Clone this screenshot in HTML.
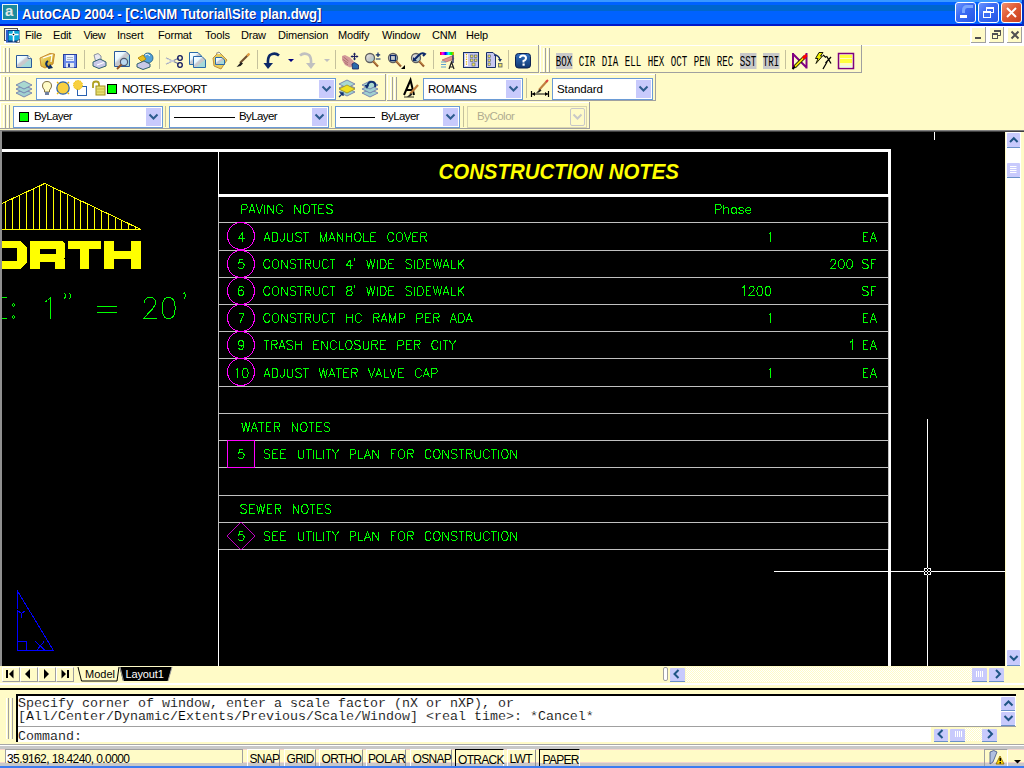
<!DOCTYPE html>
<html><head><meta charset="utf-8">
<style>
*{margin:0;padding:0;box-sizing:border-box}
html,body{width:1024px;height:768px;overflow:hidden;background:#FFFBC7;font-family:"Liberation Sans",sans-serif}
#root{position:relative;width:1024px;height:768px;overflow:hidden;background:#FFFBC7}
.a{position:absolute}
#title{left:0;top:0;width:1024px;height:26px;background:linear-gradient(to bottom,#3A98FF 0,#3A98FF 2px,#0062FF 2px,#0062FF 5px,#0066CC 5px,#0066CC 11px,#0062FF 11px,#0062FF 24px,#0018C8 24px,#0018C8 26px)}
#ttext{left:22px;top:6px;font-size:14px;font-weight:bold;color:#fff;white-space:nowrap;text-shadow:1px 1px 0 #0A1874;transform:scaleX(0.942);transform-origin:0 0}
.tbtn{top:2px;width:21px;height:21px;border:1px solid #fff;border-radius:3px;background:linear-gradient(135deg,#6C95FF 0,#3C6CF4 40%,#2456E6 100%)}
.menu{top:29px;font-size:11px;color:#000;white-space:nowrap;letter-spacing:-0.2px}
.tb{background:#FFFBC7;border-top:1px solid #fff;border-bottom:1px solid #A0A0A0;border-right:1px solid #A0A0A0}
.grip{width:2px;border-left:1px solid #fff;border-right:1px solid #999}
.sep{width:2px;border-left:1px solid #C8C4A0;border-right:1px solid #fff}
.combo{background:#fff;border:1px solid #7F9DB9;font-size:12px;white-space:nowrap;overflow:hidden}
.dd{background:#C6CCFC;border:1px solid #fff}
#draw{left:2px;top:132px;width:1003px;height:534px;background:#000;overflow:hidden}
.cmd{font-family:"Liberation Mono",monospace;font-size:13.33px;line-height:13px;color:#000;white-space:pre;-webkit-text-stroke:0.15px #fff}
.ct{font-size:11.5px;white-space:nowrap;color:#000}
.sb{font-size:12px;line-height:13px;white-space:nowrap;letter-spacing:-0.7px}
</style></head><body><div id="root">
<!-- TITLE -->
<div id="title" class="a"></div>
<div class="a" style="left:2px;top:4px;width:16px;height:16px;background:#1C8C9C;border:1px solid #E8F4F4"></div>
<div class="a" style="left:5px;top:2px;font-size:15px;font-weight:bold;color:#E0E8E8">a</div>
<div id="ttext" class="a">AutoCAD 2004 - [C:\CNM Tutorial\Site plan.dwg]</div>
<div class="a tbtn" style="left:955px"></div>
<div class="a tbtn" style="left:978px"></div>
<div class="a tbtn" style="left:1001px;background:linear-gradient(135deg,#F09070 0,#E05C34 45%,#C84020 100%)"></div>
<div class="a" style="left:1022px;top:0;width:2px;height:26px;background:#0030C0"></div>

<!-- MENU -->
<div class="a menu" style="left:25px">File</div>
<div class="a menu" style="left:53px">Edit</div>
<div class="a menu" style="left:83.5px;letter-spacing:-0.5px">View</div>
<div class="a menu" style="left:117px">Insert</div>
<div class="a menu" style="left:158px">Format</div>
<div class="a menu" style="left:205px">Tools</div>
<div class="a menu" style="left:241px">Draw</div>
<div class="a menu" style="left:278px">Dimension</div>
<div class="a menu" style="left:338px">Modify</div>
<div class="a menu" style="left:382px">Window</div>
<div class="a menu" style="left:432px">CNM</div>
<div class="a menu" style="left:466px">Help</div>

<!-- TOOLBARS -->
<div class="a" style="left:0px;top:45px;width:1024px;height:1px;background:#fff"></div>
<div class="a" style="left:0px;top:45px;width:538px;height:1px;background:#fff"></div>
<div class="a" style="left:0px;top:45px;width:1px;height:27px;background:#fff"></div>
<div class="a" style="left:538px;top:45px;width:1px;height:28px;background:#A0A0A0"></div>
<div class="a" style="left:0px;top:72px;width:539px;height:1px;background:#A0A0A0"></div>
<div class="a" style="left:3px;top:48px;width:1px;height:24px;background:#fff"></div>
<div class="a" style="left:5px;top:48px;width:1px;height:24px;background:#A0A0A0"></div>
<div class="a" style="left:7px;top:48px;width:1px;height:24px;background:#fff"></div>
<div class="a" style="left:9px;top:48px;width:1px;height:24px;background:#A0A0A0"></div>
<div class="a" style="left:540px;top:45px;width:321px;height:1px;background:#fff"></div>
<div class="a" style="left:540px;top:45px;width:1px;height:27px;background:#fff"></div>
<div class="a" style="left:861px;top:45px;width:1px;height:28px;background:#A0A0A0"></div>
<div class="a" style="left:540px;top:72px;width:322px;height:1px;background:#A0A0A0"></div>
<div class="a" style="left:543px;top:48px;width:1px;height:24px;background:#fff"></div>
<div class="a" style="left:545px;top:48px;width:1px;height:24px;background:#A0A0A0"></div>
<div class="a" style="left:547px;top:48px;width:1px;height:24px;background:#fff"></div>
<div class="a" style="left:549px;top:48px;width:1px;height:24px;background:#A0A0A0"></div>
<div class="a" style="left:0px;top:74px;width:385px;height:1px;background:#fff"></div>
<div class="a" style="left:0px;top:74px;width:1px;height:26px;background:#fff"></div>
<div class="a" style="left:385px;top:74px;width:1px;height:27px;background:#A0A0A0"></div>
<div class="a" style="left:0px;top:100px;width:386px;height:1px;background:#A0A0A0"></div>
<div class="a" style="left:3px;top:77px;width:1px;height:23px;background:#fff"></div>
<div class="a" style="left:5px;top:77px;width:1px;height:23px;background:#A0A0A0"></div>
<div class="a" style="left:7px;top:77px;width:1px;height:23px;background:#fff"></div>
<div class="a" style="left:9px;top:77px;width:1px;height:23px;background:#A0A0A0"></div>
<div class="a" style="left:387px;top:74px;width:268px;height:1px;background:#fff"></div>
<div class="a" style="left:387px;top:74px;width:1px;height:26px;background:#fff"></div>
<div class="a" style="left:655px;top:74px;width:1px;height:27px;background:#A0A0A0"></div>
<div class="a" style="left:387px;top:100px;width:269px;height:1px;background:#A0A0A0"></div>
<div class="a" style="left:390px;top:77px;width:1px;height:23px;background:#fff"></div>
<div class="a" style="left:392px;top:77px;width:1px;height:23px;background:#A0A0A0"></div>
<div class="a" style="left:394px;top:77px;width:1px;height:23px;background:#fff"></div>
<div class="a" style="left:396px;top:77px;width:1px;height:23px;background:#A0A0A0"></div>
<div class="a" style="left:0px;top:102px;width:589px;height:1px;background:#fff"></div>
<div class="a" style="left:0px;top:102px;width:1px;height:26px;background:#fff"></div>
<div class="a" style="left:589px;top:102px;width:1px;height:27px;background:#A0A0A0"></div>
<div class="a" style="left:0px;top:128px;width:590px;height:1px;background:#A0A0A0"></div>
<div class="a" style="left:3px;top:105px;width:1px;height:23px;background:#fff"></div>
<div class="a" style="left:5px;top:105px;width:1px;height:23px;background:#A0A0A0"></div>
<div class="a" style="left:7px;top:105px;width:1px;height:23px;background:#fff"></div>
<div class="a" style="left:9px;top:105px;width:1px;height:23px;background:#A0A0A0"></div>
<div class="a" style="left:84px;top:50px;width:1px;height:19px;background:#C5C19C"></div>
<div class="a" style="left:159px;top:50px;width:1px;height:19px;background:#C5C19C"></div>
<div class="a" style="left:257px;top:50px;width:1px;height:19px;background:#C5C19C"></div>
<div class="a" style="left:335px;top:50px;width:1px;height:19px;background:#C5C19C"></div>
<div class="a" style="left:433px;top:50px;width:1px;height:19px;background:#C5C19C"></div>
<div class="a" style="left:508px;top:50px;width:1px;height:19px;background:#C5C19C"></div>
<div class="a" style="left:785px;top:50px;width:1px;height:19px;background:#C5C19C"></div>
<div class="a" style="left:526px;top:78px;width:1px;height:20px;background:#C5C19C"></div>
<div class="a" style="left:165px;top:106px;width:1px;height:21px;background:#C5C19C"></div>
<div class="a" style="left:331px;top:106px;width:1px;height:21px;background:#C5C19C"></div>
<div class="a" style="left:463px;top:106px;width:1px;height:21px;background:#C5C19C"></div>
<div class="a" style="left:36px;top:78px;width:300px;height:22px;background:#fff;border:1px solid #6A9BD6"></div>
<div class="a" style="left:319px;top:80px;width:15px;height:18px;background:#C8CAFC"></div>
<svg class="a" style="left:319px;top:80px" width="15" height="18"><path d="M3.5,6.5 L7.5,10.5 L11.5,6.5" fill="none" stroke="#2D5C8E" stroke-width="2"/></svg>
<div class="a" style="left:423px;top:78px;width:100px;height:22px;background:#fff;border:1px solid #6A9BD6"></div>
<div class="a" style="left:506px;top:80px;width:15px;height:18px;background:#C8CAFC"></div>
<svg class="a" style="left:506px;top:80px" width="15" height="18"><path d="M3.5,6.5 L7.5,10.5 L11.5,6.5" fill="none" stroke="#2D5C8E" stroke-width="2"/></svg>
<div class="a" style="left:552px;top:78px;width:101px;height:22px;background:#fff;border:1px solid #6A9BD6"></div>
<div class="a" style="left:636px;top:80px;width:15px;height:18px;background:#C8CAFC"></div>
<svg class="a" style="left:636px;top:80px" width="15" height="18"><path d="M3.5,6.5 L7.5,10.5 L11.5,6.5" fill="none" stroke="#2D5C8E" stroke-width="2"/></svg>
<div class="a" style="left:13px;top:106px;width:150px;height:22px;background:#fff;border:1px solid #6A9BD6"></div>
<div class="a" style="left:146px;top:108px;width:15px;height:18px;background:#C8CAFC"></div>
<svg class="a" style="left:146px;top:108px" width="15" height="18"><path d="M3.5,6.5 L7.5,10.5 L11.5,6.5" fill="none" stroke="#2D5C8E" stroke-width="2"/></svg>
<div class="a" style="left:169px;top:106px;width:160px;height:22px;background:#fff;border:1px solid #6A9BD6"></div>
<div class="a" style="left:312px;top:108px;width:15px;height:18px;background:#C8CAFC"></div>
<svg class="a" style="left:312px;top:108px" width="15" height="18"><path d="M3.5,6.5 L7.5,10.5 L11.5,6.5" fill="none" stroke="#2D5C8E" stroke-width="2"/></svg>
<div class="a" style="left:335px;top:106px;width:125px;height:22px;background:#fff;border:1px solid #6A9BD6"></div>
<div class="a" style="left:443px;top:108px;width:15px;height:18px;background:#C8CAFC"></div>
<svg class="a" style="left:443px;top:108px" width="15" height="18"><path d="M3.5,6.5 L7.5,10.5 L11.5,6.5" fill="none" stroke="#2D5C8E" stroke-width="2"/></svg>
<div class="a" style="left:467px;top:106px;width:120px;height:22px;background:#FFFBC7;border:1px solid #D8D4B0"></div>
<div class="a" style="left:570px;top:108px;width:15px;height:18px;background:#FFFBC7;border:1px solid #C8C8C8;border-radius:2px"></div>
<svg class="a" style="left:570px;top:108px" width="15" height="18"><path d="M3.5,6.5 L7.5,10.5 L11.5,6.5" fill="none" stroke="#C8C8C8" stroke-width="2"/></svg>
<div class="a ct" style="left:122px;top:83px;letter-spacing:-0.47px">NOTES-EXPORT</div>
<div class="a ct" style="left:428px;top:83px;letter-spacing:-0.3px">ROMANS</div>
<div class="a ct" style="left:557px;top:83px;letter-spacing:-0.1px">Standard</div>
<div class="a ct" style="left:34px;top:110px;letter-spacing:-0.6px">ByLayer</div>
<div class="a ct" style="left:239px;top:110px;letter-spacing:-0.6px">ByLayer</div>
<div class="a ct" style="left:381px;top:110px;letter-spacing:-0.6px">ByLayer</div>
<div class="a ct" style="left:477px;top:110px;color:#B0AC90;letter-spacing:-0.5px">ByColor</div>
<div class="a" style="left:107px;top:84px;width:10px;height:10px;background:#00FF00;border:1px solid #000"></div>
<div class="a" style="left:19px;top:112px;width:10px;height:10px;background:#00FF00;border:1px solid #000"></div>
<div class="a" style="left:174px;top:117px;width:61px;height:1px;background:#000"></div>
<div class="a" style="left:340px;top:117px;width:35px;height:1px;background:#000"></div>
<svg class="a" style="left:0;top:45px" width="1024" height="86" viewBox="0 45 1024 86" font-family="Liberation Sans"><defs>
<linearGradient id="gdoc" x1="0" y1="0" x2="1" y2="1"><stop offset="0" stop-color="#fff"/><stop offset="0.35" stop-color="#E8F8FF"/><stop offset="0.45" stop-color="#C8C8D0"/><stop offset="0.6" stop-color="#C8C8C8"/><stop offset="0.62" stop-color="#A8D8D8"/><stop offset="1" stop-color="#A0D8D8"/></linearGradient>
<linearGradient id="gfold" x1="0" y1="0" x2="1" y2="1"><stop offset="0" stop-color="#F8E8A0"/><stop offset="0.5" stop-color="#E0C040"/><stop offset="1" stop-color="#C09020"/></linearGradient>
<linearGradient id="gmag" x1="0" y1="0" x2="1" y2="1"><stop offset="0" stop-color="#F0F0F0"/><stop offset="0.5" stop-color="#C8C8C8"/><stop offset="1" stop-color="#90D0D8"/></linearGradient>
<linearGradient id="ghelp" x1="0" y1="0" x2="0" y2="1"><stop offset="0" stop-color="#3070C0"/><stop offset="1" stop-color="#103870"/></linearGradient>
</defs>
<g transform="translate(16,55)">
<defs></defs>
<path d="M0.5,0.5 H12 L15.5,4 V12.5 H0.5 Z" fill="url(#gdoc)" stroke="#2A5A9A" stroke-width="1"/>
<path d="M12,0.5 V3.5 H15.5" fill="#fff" stroke="#2A5A9A" stroke-width="0.8"/>
</g>
<path d="M40,58 L50,53.5 L54.5,54 L53,64 L45,68 L41,66 Z" fill="url(#gfold)" stroke="#C88830" stroke-width="1"/>
<path d="M43,58 L52,55 L51,62" fill="none" stroke="#fff" stroke-width="1.2"/>
<path d="M48,61 Q45,63 47,66 L50,68" fill="none" stroke="#0A2A60" stroke-width="2"/><path d="M48,69 L53,68 L50,64 Z" fill="#0A2A60"/>
<rect x="63.5" y="54.5" width="13" height="13" fill="#6C8CE8" stroke="#2840A0" stroke-width="1"/>
<rect x="66" y="55" width="8" height="6" fill="#E8F0FF"/><path d="M67,57.5 H73 M67,59.5 H73" stroke="#9AB" stroke-width="0.8"/>
<rect x="66" y="63" width="8" height="4.5" fill="#E0E8F0"/><rect x="68" y="63.5" width="2" height="3.5" fill="#2840A0"/>
<path d="M94,55 L98,53.5 L101,56 L101,62 L96,63 Z" fill="#E8E8F0" stroke="#707890" stroke-width="0.8"/>
<path d="M93,62 L100,59 L106,62 L106,66 L99,68.5 L93,66 Z" fill="#C8C8E8" stroke="#306070" stroke-width="1"/>
<path d="M97,65 L104,62.5" stroke="#fff" stroke-width="1.2"/>
<path d="M114.5,51.5 H126 L129.5,55 V66.5 H114.5 Z" fill="url(#gdoc)" stroke="#2A5A9A" stroke-width="1"/>
<circle cx="124" cy="62" r="3.6" fill="#B8D8F0" stroke="#505870" stroke-width="1.2"/>
<path d="M121.5,64.5 L117,69" stroke="#905028" stroke-width="1.8"/>
<circle cx="148" cy="58" r="5" fill="#50A0D8" stroke="#205880" stroke-width="0.8"/><path d="M145,55 Q148,53 150,56" stroke="#fff" stroke-width="1" fill="none"/>
<path d="M138,58 L143,55 L146,59 L142,62 Z" fill="#E8C020" stroke="#B08000" stroke-width="0.8"/>
<path d="M137,64 L144,61 L150,64 L150,67 L143,69.5 L137,67 Z" fill="#C8C8E8" stroke="#306070" stroke-width="1"/>
<path d="M166,58 L179,64 M166,64 L179,58" stroke="#7880A0" stroke-width="1.3"/><path d="M166,58.5 L174,61.5 M166,63.5 L174,60.5" stroke="#fff" stroke-width="0.6"/>
<circle cx="180" cy="58" r="2.3" fill="none" stroke="#101860" stroke-width="1.3"/><circle cx="180" cy="65" r="2.3" fill="none" stroke="#101860" stroke-width="1.3"/>
<path d="M189.5,52.5 H198 L201.5,56 V64.5 H189.5 Z" fill="url(#gdoc)" stroke="#2A6AAA" stroke-width="1"/>
<path d="M193.5,56.5 H202 L205.5,60 V67.5 H193.5 Z" fill="url(#gdoc)" stroke="#2A6AAA" stroke-width="1"/>
<path d="M213,58 L219,52 L227,60 L221,69 L214,66 Z" fill="#E8D060" stroke="#C09040" stroke-width="1"/>
<path d="M215.5,57.5 H222 L224.5,60 V64.5 H215.5 Z" fill="url(#gdoc)" stroke="#2A6AAA" stroke-width="1"/>
<path d="M216,53.5 L219,52 L221,54" stroke="#909090" stroke-width="1" fill="#fff"/>
<path d="M249,54 L240,63" stroke="#705030" stroke-width="2.2"/><path d="M249.5,53.5 L247,56" stroke="#E8A040" stroke-width="2"/>
<path d="M241,62 L237,66.5 L236.5,67 L240.5,66 L243,63.5 Z" fill="#202020"/>
<path d="M279,55.5 Q275,52 270,55 Q267.5,57.5 268,64" fill="none" stroke="#0C2868" stroke-width="2.6"/>
<path d="M263.5,63 L273,63 L268,69 Z" fill="#0C2868"/>
<path d="M288,59 H294 L291,62 Z" fill="#000080"/>
<path d="M300,55.5 Q304,52 309,55 Q311.5,57.5 311,64" fill="none" stroke="#C0C0C0" stroke-width="2.6"/>
<path d="M315.5,63 L306,63 L311,69 Z" fill="#C0C0C0"/>
<path d="M324,59 H330 L327,62 Z" fill="#C0C0C0"/>
<path d="M342,56 L345,55 L350,57.5 L354,61.5 L354,65.5 L350,67.5 L345,65 L342,60 Z" fill="#D49A9A"/>
<path d="M343.5,57 L348.5,61 M343,59.5 L348,63 M344.5,62.5 L348,65" stroke="#A86A6A" stroke-width="0.9"/>
<path d="M352,64 L354.5,62.5 L358.5,65 L358.5,69 L352.5,69 Z" fill="#2A6AAA" stroke="#1A2060" stroke-width="0.8"/>
<path d="M354.5,53 V60 M351,56.5 H358" stroke="#1C2060" stroke-width="1.2"/><path d="M353,54.5 L354.5,52.5 L356,54.5 Z M353,58.5 L354.5,60.5 L356,58.5 Z M352.5,55 L350.5,56.5 L352.5,58 Z M356.5,55 L358.5,56.5 L356.5,58 Z" fill="#1C2060"/>
<circle cx="370" cy="58" r="4.5" fill="url(#gmag)" stroke="#606060" stroke-width="1.3"/>
<path d="M373,61 L378,66.5" stroke="#905028" stroke-width="2"/><path d="M373.5,61 L378,65.5" stroke="#E8C060" stroke-width="0.8"/>
<path d="M378,52.5 V57 M375.8,54.8 H380.2 M375.8,59 H380.5" stroke="#0C2868" stroke-width="1.2"/>
<circle cx="393" cy="58" r="4.5" fill="url(#gmag)" stroke="#606060" stroke-width="1.3"/>
<path d="M396,61 L401,66.5" stroke="#905028" stroke-width="2"/><path d="M396.5,61 L401,65.5" stroke="#E8C060" stroke-width="0.8"/>
<rect x="390.5" y="55.5" width="5" height="5" fill="none" stroke="#0C2868" stroke-width="1.2"/>
<path d="M401,69 L405,65 L405,69 Z" fill="#000"/>
<circle cx="416" cy="58" r="4.5" fill="url(#gmag)" stroke="#606060" stroke-width="1.3"/>
<path d="M419,61 L424,66.5" stroke="#905028" stroke-width="2"/><path d="M419.5,61 L424,65.5" stroke="#E8C060" stroke-width="0.8"/>
<path d="M414,60 L419,55 Q422,52 425,54 L423,56" fill="none" stroke="#0C2868" stroke-width="2"/><path d="M413,57 V61 H417 Z" fill="#0C2868"/>
<rect x="440" y="52" width="14" height="3" fill="url(#grain)"/>
<defs><linearGradient id="grain" x1="0" x2="1"><stop offset="0" stop-color="#FF0000"/><stop offset="0.2" stop-color="#FF00FF"/><stop offset="0.4" stop-color="#0000FF"/><stop offset="0.6" stop-color="#00FFFF"/><stop offset="0.8" stop-color="#00FF00"/><stop offset="1" stop-color="#FFA000"/></linearGradient></defs>
<path d="M442,60 L452,56 L454,59 L446,62 Z" fill="#E09090" stroke="#A05050" stroke-width="0.6"/><path d="M453,55 V63" stroke="#303870" stroke-width="1.5"/>
<path d="M441,62 H446 M441,64.5 H446 M441,67 H446" stroke="#60A0D0" stroke-width="1.2"/><path d="M449,69 L451.5,62 L454,69 M450,67 H453" fill="none" stroke="#202020" stroke-width="1.2"/>
<rect x="463.5" y="52.5" width="15" height="15" fill="#C8C8F0" stroke="#18306A" stroke-width="1"/>
<rect x="465" y="54" width="3" height="12" fill="#fff"/><path d="M466.5,54 V66" stroke="#E0B000" stroke-width="1.3" stroke-dasharray="1.2,1.2"/>
<rect x="470.5" y="55" width="2.5" height="2.5" fill="#F0E060" stroke="#506070" stroke-width="0.6"/><rect x="474.5" y="55" width="2.5" height="2.5" fill="#F0E060" stroke="#506070" stroke-width="0.6"/><rect x="470.5" y="59" width="2.5" height="2.5" fill="#F0E060" stroke="#506070" stroke-width="0.6"/><rect x="474.5" y="59" width="2.5" height="2.5" fill="#F0E060" stroke="#506070" stroke-width="0.6"/><rect x="472" y="63" width="3" height="3" fill="#F0E060" stroke="#506070" stroke-width="0.6"/>
<path d="M486.5,52.5 H493 L495.5,55 V67.5 H486.5 Z" fill="#C8C8F0" stroke="#18306A" stroke-width="1"/>
<rect x="488" y="55" width="2.5" height="2.5" fill="#F0E060" stroke="#506070" stroke-width="0.6"/><rect x="488" y="59" width="2.5" height="2.5" fill="#F0E060" stroke="#506070" stroke-width="0.6"/><rect x="488" y="63" width="2.5" height="2.5" fill="#F0E060" stroke="#506070" stroke-width="0.6"/>
<path d="M494,55 Q499,55 500,60" fill="none" stroke="#18306A" stroke-width="1.3"/><path d="M498,59 H502 L500,62 Z" fill="#18306A"/><rect x="498.5" y="63.5" width="3.5" height="3.5" fill="#F0E060" stroke="#506070" stroke-width="0.8"/>
<rect x="515.5" y="53.5" width="15" height="14.5" rx="3" fill="url(#ghelp)" stroke="#0C2050" stroke-width="1"/>
<path d="M520,58 Q520,55.5 523,55.5 Q526,55.5 526,58 Q526,60 523.5,61 V62.5" fill="none" stroke="#fff" stroke-width="2"/><rect x="522.5" y="63.5" width="2.2" height="2.2" fill="#fff"/>
<rect x="556" y="53" width="16.5" height="16" fill="#C8C8C8"/>
<text x="564" y="66.3" text-anchor="middle" font-family="Liberation Mono" font-size="15.5" textLength="16.5" lengthAdjust="spacingAndGlyphs" fill="#000">BOX</text>
<text x="587" y="66.3" text-anchor="middle" font-family="Liberation Mono" font-size="15.5" textLength="16.5" lengthAdjust="spacingAndGlyphs" fill="#000">CIR</text>
<text x="610" y="66.3" text-anchor="middle" font-family="Liberation Mono" font-size="15.5" textLength="16.5" lengthAdjust="spacingAndGlyphs" fill="#000">DIA</text>
<text x="633" y="66.3" text-anchor="middle" font-family="Liberation Mono" font-size="15.5" textLength="16.5" lengthAdjust="spacingAndGlyphs" fill="#000">ELL</text>
<text x="656" y="66.3" text-anchor="middle" font-family="Liberation Mono" font-size="15.5" textLength="16.5" lengthAdjust="spacingAndGlyphs" fill="#000">HEX</text>
<text x="679" y="66.3" text-anchor="middle" font-family="Liberation Mono" font-size="15.5" textLength="16.5" lengthAdjust="spacingAndGlyphs" fill="#000">OCT</text>
<text x="702" y="66.3" text-anchor="middle" font-family="Liberation Mono" font-size="15.5" textLength="16.5" lengthAdjust="spacingAndGlyphs" fill="#000">PEN</text>
<text x="725" y="66.3" text-anchor="middle" font-family="Liberation Mono" font-size="15.5" textLength="16.5" lengthAdjust="spacingAndGlyphs" fill="#000">REC</text>
<rect x="740" y="53" width="16.5" height="16" fill="#C8C8C8"/>
<text x="748" y="66.3" text-anchor="middle" font-family="Liberation Mono" font-size="15.5" textLength="16.5" lengthAdjust="spacingAndGlyphs" fill="#000">SST</text>
<rect x="763" y="53" width="16.5" height="16" fill="#C8C8C8"/>
<text x="771" y="66.3" text-anchor="middle" font-family="Liberation Mono" font-size="15.5" textLength="16.5" lengthAdjust="spacingAndGlyphs" fill="#000">TRI</text>
<path d="M793,53 V68.5 M806.5,53 V68.5 M793,54 L806.5,67.5" fill="none" stroke="#800080" stroke-width="2"/>
<path d="M794.5,67 L805,56.5" stroke="#000" stroke-width="3.4"/><path d="M794.5,67 L805,56.5" stroke="#F0E000" stroke-width="1.8"/><path d="M803,58.5 L806.5,55" stroke="#FF0000" stroke-width="3"/><path d="M792.5,69 L795,66.5" stroke="#000" stroke-width="2"/>
<path d="M819,52.5 L823,52.5 L820.5,56 L822.5,56 L816,63.5 L818,58.5 L815.5,58.5 Z" fill="#F0F000" stroke="#000" stroke-width="0.9"/>
<path d="M823,55 L826,57.5 M826.5,56 L831,63.5 M831,57 L825.5,63 M827,62 L823,69" stroke="#000" stroke-width="1.3"/>
<rect x="838.5" y="53.5" width="15" height="15" fill="#FFFBC7" stroke="#800080" stroke-width="1.5"/><rect x="840" y="55" width="12" height="3" fill="#FFFF40"/><rect x="840" y="59" width="12" height="4" fill="#FFFF40"/><rect x="840" y="66" width="12" height="1.5" fill="#E8F8F0"/>
<path d="M16,93 L24,89 L32,93 L24,97 Z" fill="#A0D0D0" stroke="#6870A8" stroke-width="0.8"/>
<path d="M16,89 L24,85 L32,89 L24,93 Z" fill="#A0D0D0" stroke="#6870A8" stroke-width="0.8"/>
<path d="M16,85 L24,81 L32,85 L24,89 Z" fill="#A8D8D0" stroke="#6870A8" stroke-width="0.8"/>
<path d="M47,81.5 Q51.5,81.5 51.5,86 Q51.5,88 49.5,90 V92 H44.5 V90 Q42.5,88 42.5,86 Q42.5,81.5 47,81.5 Z" fill="#FFFBC7" stroke="#807040" stroke-width="1"/><rect x="45" y="92" width="4" height="3" fill="#7080A0"/>
<circle cx="63" cy="88" r="6.2" fill="#F8D040" stroke="#2860B0" stroke-width="1.2"/>
<path d="M57,82 L58.5,83.5 M69,82 L67.5,83.5 M57,94 L58.5,92.5 M69,94 L67.5,92.5" stroke="#F0B800" stroke-width="1.4"/>
<rect x="77.5" y="86.5" width="9" height="9" fill="#fff" stroke="#2860B0" stroke-width="1"/>
<circle cx="78" cy="85" r="4.5" fill="#F8D040" stroke="#F0C000" stroke-width="1" stroke-dasharray="1.5,1"/>
<path d="M93,88 V84 Q93,81.5 96,81.5 Q99,81.5 99,84 V86" fill="none" stroke="#B0A020" stroke-width="1.8"/>
<rect x="96" y="86" width="9" height="9" fill="#E8E070" stroke="#A09020" stroke-width="1"/><path d="M97,89 H104 M97,92 H104" stroke="#C0B040" stroke-width="0.8"/>
<path d="M339,92 L347,88 L355,92 L347,96 Z" fill="#A0D0D0" stroke="#6870A8" stroke-width="0.8"/>
<path d="M339,88 L347,84 L355,88 L347,92 Z" fill="#A0D0D0" stroke="#6870A8" stroke-width="0.8"/>
<path d="M339,84 L347,80 L355,84 L347,88 Z" fill="#A8D8D0" stroke="#6870A8" stroke-width="0.8"/>
<path d="M339,89 L347,85 L355,89 L347,93 Z" fill="#F0E020" stroke="#A09020" stroke-width="0.8"/>
<path d="M339,97 L343,93 M340,93 H343 V96" fill="none" stroke="#103070" stroke-width="1.3"/>
<path d="M362,93 L370,89 L378,93 L370,97 Z" fill="#A0D0D0" stroke="#6870A8" stroke-width="0.8"/>
<path d="M362,89 L370,85 L378,89 L370,93 Z" fill="#A0D0D0" stroke="#6870A8" stroke-width="0.8"/>
<path d="M362,85 L370,81 L378,85 L370,89 Z" fill="#A8D8D0" stroke="#6870A8" stroke-width="0.8"/>
<path d="M367,87 Q368,81 373,82 Q376,83 375,87" fill="none" stroke="#103070" stroke-width="2"/><path d="M364.5,85 L369,85 L367,89 Z" fill="#103070"/>
<path d="M404,95 L410.5,80 L414,95 M406.5,90 H413" fill="none" stroke="#000" stroke-width="2"/>
<path d="M418,85 L410,94" stroke="#C08040" stroke-width="2.2"/><path d="M411,93 L407,97 L410,96.5 L412.5,94.5 Z" fill="#202020"/><path d="M404,97 H414" stroke="#000" stroke-width="0.8"/>
<path d="M531.5,91 V97 M548.5,91 V97 M532,94 H548" stroke="#000" stroke-width="1.2"/><path d="M532,94 L535,92 V96 Z M548,94 L545,92 V96 Z" fill="#000"/>
<path d="M547,81 L539,90" stroke="#C08040" stroke-width="2.2"/><path d="M540,89 L536,93 L539,92.5 L541.5,90.5 Z" fill="#202020"/><path d="M546,82 L548,80" stroke="#E04040" stroke-width="2"/></svg>
<!-- DRAWING -->
<div class="a" style="left:0;top:130px;width:1024px;height:1px;background:#808080"></div>
<div class="a" style="left:0;top:131px;width:1024px;height:1px;background:#404040"></div>
<div class="a" style="left:0;top:131px;width:2px;height:536px;background:#909090"></div>
<div id="draw" class="a"></div>
<svg class="a" style="left:2px;top:132px" width="1003" height="534" viewBox="2 132 1003 534" font-family="Liberation Sans" shape-rendering="crispEdges"><rect x="2" y="149" width="889" height="3" fill="#FFFFFF"/>
<rect x="888" y="149" width="3" height="48" fill="#FFFFFF"/>
<rect x="218" y="152" width="1" height="42" fill="#FFFFFF"/>
<rect x="218" y="194" width="673" height="3" fill="#FFFFFF"/>
<rect x="218" y="197" width="1" height="352" fill="#C0C0C0"/>
<rect x="218" y="549" width="1" height="117" fill="#FFFFFF"/>
<rect x="888" y="197" width="1" height="352" fill="#C0C0C0"/>
<rect x="889" y="197" width="2" height="352" fill="#FFFFFF"/>
<rect x="888" y="549" width="3" height="117" fill="#FFFFFF"/>
<rect x="219" y="222" width="669" height="1" fill="#C0C0C0"/>
<rect x="219" y="250" width="669" height="1" fill="#C0C0C0"/>
<rect x="219" y="277" width="669" height="1" fill="#C0C0C0"/>
<rect x="219" y="304" width="669" height="1" fill="#C0C0C0"/>
<rect x="219" y="331" width="669" height="1" fill="#C0C0C0"/>
<rect x="219" y="358" width="669" height="1" fill="#C0C0C0"/>
<rect x="219" y="386" width="669" height="1" fill="#C0C0C0"/>
<rect x="219" y="413" width="669" height="1" fill="#C0C0C0"/>
<rect x="219" y="440" width="669" height="1" fill="#C0C0C0"/>
<rect x="219" y="467" width="669" height="1" fill="#C0C0C0"/>
<rect x="219" y="495" width="669" height="1" fill="#C0C0C0"/>
<rect x="219" y="522" width="669" height="1" fill="#C0C0C0"/>
<rect x="219" y="549" width="669" height="1" fill="#C0C0C0"/>
<rect x="934" y="132" width="1" height="8" fill="#FFFFFF"/>
<rect x="927" y="419" width="1" height="247" fill="#FFFFFF"/>
<rect x="774" y="571" width="231" height="1" fill="#FFFFFF"/>
<rect x="924.5" y="568.5" width="6" height="6" fill="none" stroke="#fff" stroke-width="1"/>
<rect x="927" y="568" width="1" height="1" fill="#000"/>
<rect x="927" y="574" width="1" height="1" fill="#000"/>
<rect x="924" y="571" width="1" height="1" fill="#000"/>
<rect x="930" y="571" width="1" height="1" fill="#000"/>
<rect x="927" y="571" width="1" height="1" fill="#000"/>
<text x="438.5" y="179" font-size="21.5" fill="#FFFF00" textLength="240.5" lengthAdjust="spacingAndGlyphs" font-weight="bold" font-style="italic" shape-rendering="auto">CONSTRUCTION NOTES</text>
<path d="M241.50,204.50 L241.50,213.50 M241.50,204.50 L245.15,204.50 L246.36,204.93 L246.76,205.36 L247.17,206.21 L247.17,207.50 L246.76,208.36 L246.36,208.79 L245.15,209.21 L241.50,209.21 M252.03,204.50 L248.79,213.50 M252.03,204.50 L255.27,213.50 M250.00,210.50 L254.06,210.50 M256.08,204.50 L259.32,213.50 M262.56,204.50 L259.32,213.50 M264.58,204.50 L264.58,213.50 M267.82,204.50 L267.82,213.50 M267.82,204.50 L273.50,213.50 M273.50,204.50 L273.50,213.50 M282.40,206.64 L282.00,205.79 L281.19,204.93 L280.38,204.50 L278.76,204.50 L277.95,204.93 L277.14,205.79 L276.74,206.64 L276.33,207.93 L276.33,210.07 L276.74,211.36 L277.14,212.21 L277.95,213.07 L278.76,213.50 L280.38,213.50 L281.19,213.07 L282.00,212.21 L282.40,211.36 L282.40,210.07 M280.38,210.07 L282.40,210.07 M294.56,204.50 L294.56,213.50 M294.56,204.50 L300.23,213.50 M300.23,204.50 L300.23,213.50 M305.49,204.50 L304.68,204.93 L303.87,205.79 L303.47,206.64 L303.06,207.93 L303.06,210.07 L303.47,211.36 L303.87,212.21 L304.68,213.07 L305.49,213.50 L307.11,213.50 L307.92,213.07 L308.73,212.21 L309.13,211.36 L309.54,210.07 L309.54,207.93 L309.13,206.64 L308.73,205.79 L307.92,204.93 L307.11,204.50 L305.49,204.50 M314.00,204.50 L314.00,213.50 M311.16,204.50 L316.83,204.50 M318.86,204.50 L318.86,213.50 M318.86,204.50 L324.12,204.50 M318.86,208.79 L322.10,208.79 M318.86,213.50 L324.12,213.50 M332.22,205.79 L331.41,204.93 L330.19,204.50 L328.57,204.50 L327.36,204.93 L326.55,205.79 L326.55,206.64 L326.96,207.50 L327.36,207.93 L328.17,208.36 L330.60,209.21 L331.41,209.64 L331.81,210.07 L332.22,210.93 L332.22,212.21 L331.41,213.07 L330.19,213.50 L328.57,213.50 L327.36,213.07 L326.55,212.21" fill="none" stroke="#00FF00" stroke-width="1"/>
<path d="M715.40,204.50 L715.40,213.50 M715.40,204.50 L719.04,204.50 L720.26,204.93 L720.66,205.36 L721.07,206.21 L721.07,207.50 L720.66,208.36 L720.26,208.79 L719.04,209.21 L715.40,209.21 M723.90,204.50 L723.90,213.50 M723.90,209.21 L725.12,207.93 L725.93,207.50 L727.14,207.50 L727.95,207.93 L728.36,209.21 L728.36,213.50 M736.05,207.50 L736.05,213.50 M736.05,208.79 L735.25,207.93 L734.43,207.50 L733.22,207.50 L732.41,207.93 L731.60,208.79 L731.19,210.07 L731.19,210.93 L731.60,212.21 L732.41,213.07 L733.22,213.50 L734.43,213.50 L735.25,213.07 L736.05,212.21 M743.35,208.79 L742.94,207.93 L741.73,207.50 L740.51,207.50 L739.29,207.93 L738.89,208.79 L739.29,209.64 L740.11,210.07 L742.13,210.50 L742.94,210.93 L743.35,211.79 L743.35,212.21 L742.94,213.07 L741.73,213.50 L740.51,213.50 L739.29,213.07 L738.89,212.21 M745.77,210.07 L750.63,210.07 L750.63,209.21 L750.23,208.36 L749.82,207.93 L749.01,207.50 L747.80,207.50 L746.99,207.93 L746.18,208.79 L745.77,210.07 L745.77,210.93 L746.18,212.21 L746.99,213.07 L747.80,213.50 L749.01,213.50 L749.82,213.07 L750.63,212.21" fill="none" stroke="#00FF00" stroke-width="1"/>
<ellipse cx="241" cy="236" rx="13.5" ry="13.5" fill="none" stroke="#FF00FF" stroke-width="1"/>
<path d="M242.55,232.50 L238.50,238.50 L244.57,238.50 M242.55,232.50 L242.55,241.50" fill="none" stroke="#00FF00" stroke-width="1"/>
<path d="M267.04,232.50 L263.80,241.50 M267.04,232.50 L270.28,241.50 M265.01,238.50 L269.06,238.50 M272.31,232.50 L272.31,241.50 M272.31,232.50 L275.14,232.50 L276.36,232.93 L277.17,233.79 L277.57,234.64 L277.98,235.93 L277.98,238.07 L277.57,239.36 L277.17,240.21 L276.36,241.07 L275.14,241.50 L272.31,241.50 M284.05,232.50 L284.05,239.36 L283.65,240.64 L283.24,241.07 L282.43,241.50 L281.62,241.50 L280.81,241.07 L280.41,240.64 L280.00,239.36 L280.00,238.50 M287.29,232.50 L287.29,238.93 L287.69,240.21 L288.50,241.07 L289.72,241.50 L290.53,241.50 L291.75,241.07 L292.56,240.21 L292.96,238.93 L292.96,232.50 M301.47,233.79 L300.66,232.93 L299.44,232.50 L297.82,232.50 L296.61,232.93 L295.80,233.79 L295.80,234.64 L296.20,235.50 L296.61,235.93 L297.42,236.36 L299.85,237.21 L300.66,237.64 L301.06,238.07 L301.47,238.93 L301.47,240.21 L300.66,241.07 L299.44,241.50 L297.82,241.50 L296.61,241.07 L295.80,240.21 M305.92,232.50 L305.92,241.50 M303.09,232.50 L308.75,232.50 M320.10,232.50 L320.10,241.50 M320.10,232.50 L323.34,241.50 M326.58,232.50 L323.34,241.50 M326.58,232.50 L326.58,241.50 M331.84,232.50 L328.60,241.50 M331.84,232.50 L335.08,241.50 M329.81,238.50 L333.87,238.50 M337.11,232.50 L337.11,241.50 M337.11,232.50 L342.78,241.50 M342.78,232.50 L342.78,241.50 M346.01,232.50 L346.01,241.50 M351.69,232.50 L351.69,241.50 M346.01,236.79 L351.69,236.79 M356.95,232.50 L356.14,232.93 L355.33,233.79 L354.93,234.64 L354.52,235.93 L354.52,238.07 L354.93,239.36 L355.33,240.21 L356.14,241.07 L356.95,241.50 L358.57,241.50 L359.38,241.07 L360.19,240.21 L360.60,239.36 L361.00,238.07 L361.00,235.93 L360.60,234.64 L360.19,233.79 L359.38,232.93 L358.57,232.50 L356.95,232.50 M363.84,232.50 L363.84,241.50 M363.84,241.50 L368.70,241.50 M370.72,232.50 L370.72,241.50 M370.72,232.50 L375.99,232.50 M370.72,236.79 L373.96,236.79 M370.72,241.50 L375.99,241.50 M393.81,234.64 L393.40,233.79 L392.59,232.93 L391.78,232.50 L390.16,232.50 L389.35,232.93 L388.54,233.79 L388.13,234.64 L387.73,235.93 L387.73,238.07 L388.13,239.36 L388.54,240.21 L389.35,241.07 L390.16,241.50 L391.78,241.50 L392.59,241.07 L393.40,240.21 L393.81,239.36 M398.67,232.50 L397.86,232.93 L397.05,233.79 L396.64,234.64 L396.24,235.93 L396.24,238.07 L396.64,239.36 L397.05,240.21 L397.86,241.07 L398.67,241.50 L400.29,241.50 L401.10,241.07 L401.91,240.21 L402.31,239.36 L402.72,238.07 L402.72,235.93 L402.31,234.64 L401.91,233.79 L401.10,232.93 L400.29,232.50 L398.67,232.50 M404.34,232.50 L407.58,241.50 M410.82,232.50 L407.58,241.50 M412.84,232.50 L412.84,241.50 M412.84,232.50 L418.11,232.50 M412.84,236.79 L416.08,236.79 M412.84,241.50 L418.11,241.50 M420.94,232.50 L420.94,241.50 M420.94,232.50 L424.59,232.50 L425.80,232.93 L426.21,233.36 L426.61,234.21 L426.61,235.07 L426.21,235.93 L425.80,236.36 L424.59,236.79 L420.94,236.79 M423.78,236.79 L426.61,241.50" fill="none" stroke="#00FF00" stroke-width="1"/>
<path d="M768.80,234.21 L769.61,233.79 L770.82,232.50 L770.82,241.50" fill="none" stroke="#00FF00" stroke-width="1"/>
<path d="M863.20,232.50 L863.20,241.50 M863.20,232.50 L868.47,232.50 M863.20,236.79 L866.44,236.79 M863.20,241.50 L868.47,241.50 M873.33,232.50 L870.09,241.50 M873.33,232.50 L876.57,241.50 M871.30,238.50 L875.35,238.50" fill="none" stroke="#00FF00" stroke-width="1"/>
<ellipse cx="241" cy="264" rx="13.5" ry="13.5" fill="none" stroke="#FF00FF" stroke-width="1"/>
<path d="M243.36,259.50 L239.31,259.50 L238.91,263.36 L239.31,262.93 L240.53,262.50 L241.74,262.50 L242.96,262.93 L243.76,263.79 L244.17,265.07 L244.17,265.93 L243.76,267.21 L242.96,268.07 L241.74,268.50 L240.53,268.50 L239.31,268.07 L238.91,267.64 L238.50,266.79" fill="none" stroke="#00FF00" stroke-width="1"/>
<path d="M269.88,261.64 L269.47,260.79 L268.66,259.93 L267.85,259.50 L266.23,259.50 L265.42,259.93 L264.61,260.79 L264.20,261.64 L263.80,262.93 L263.80,265.07 L264.20,266.36 L264.61,267.21 L265.42,268.07 L266.23,268.50 L267.85,268.50 L268.66,268.07 L269.47,267.21 L269.88,266.36 M274.74,259.50 L273.93,259.93 L273.12,260.79 L272.71,261.64 L272.31,262.93 L272.31,265.07 L272.71,266.36 L273.12,267.21 L273.93,268.07 L274.74,268.50 L276.36,268.50 L277.17,268.07 L277.98,267.21 L278.38,266.36 L278.79,265.07 L278.79,262.93 L278.38,261.64 L277.98,260.79 L277.17,259.93 L276.36,259.50 L274.74,259.50 M281.62,259.50 L281.62,268.50 M281.62,259.50 L287.29,268.50 M287.29,259.50 L287.29,268.50 M295.80,260.79 L294.99,259.93 L293.77,259.50 L292.15,259.50 L290.94,259.93 L290.12,260.79 L290.12,261.64 L290.53,262.50 L290.94,262.93 L291.75,263.36 L294.18,264.21 L294.99,264.64 L295.39,265.07 L295.80,265.93 L295.80,267.21 L294.99,268.07 L293.77,268.50 L292.15,268.50 L290.94,268.07 L290.12,267.21 M300.25,259.50 L300.25,268.50 M297.42,259.50 L303.09,259.50 M305.11,259.50 L305.11,268.50 M305.11,259.50 L308.75,259.50 L309.97,259.93 L310.38,260.36 L310.78,261.21 L310.78,262.07 L310.38,262.93 L309.97,263.36 L308.75,263.79 L305.11,263.79 M307.94,263.79 L310.78,268.50 M313.62,259.50 L313.62,265.93 L314.02,267.21 L314.83,268.07 L316.05,268.50 L316.86,268.50 L318.07,268.07 L318.88,267.21 L319.29,265.93 L319.29,259.50 M328.20,261.64 L327.79,260.79 L326.98,259.93 L326.17,259.50 L324.55,259.50 L323.74,259.93 L322.93,260.79 L322.53,261.64 L322.12,262.93 L322.12,265.07 L322.53,266.36 L322.93,267.21 L323.74,268.07 L324.55,268.50 L326.17,268.50 L326.98,268.07 L327.79,267.21 L328.20,266.36 M332.65,259.50 L332.65,268.50 M329.81,259.50 L335.49,259.50 M350.47,259.50 L346.42,265.50 L352.50,265.50 M350.47,259.50 L350.47,268.50 M354.93,257.79 L354.93,261.21 M366.67,259.50 L368.70,268.50 M370.72,259.50 L368.70,268.50 M370.72,259.50 L372.75,268.50 M374.77,259.50 L372.75,268.50 M377.20,259.50 L377.20,268.50 M380.44,259.50 L380.44,268.50 M380.44,259.50 L383.28,259.50 L384.49,259.93 L385.30,260.79 L385.71,261.64 L386.11,262.93 L386.11,265.07 L385.71,266.36 L385.30,267.21 L384.49,268.07 L383.28,268.50 L380.44,268.50 M388.95,259.50 L388.95,268.50 M388.95,259.50 L394.21,259.50 M388.95,263.79 L392.19,263.79 M388.95,268.50 L394.21,268.50 M411.62,260.79 L410.82,259.93 L409.60,259.50 L407.98,259.50 L406.76,259.93 L405.96,260.79 L405.96,261.64 L406.36,262.50 L406.76,262.93 L407.58,263.36 L410.00,264.21 L410.82,264.64 L411.22,265.07 L411.62,265.93 L411.62,267.21 L410.82,268.07 L409.60,268.50 L407.98,268.50 L406.76,268.07 L405.96,267.21 M414.46,259.50 L414.46,268.50 M417.70,259.50 L417.70,268.50 M417.70,259.50 L420.54,259.50 L421.75,259.93 L422.56,260.79 L422.97,261.64 L423.37,262.93 L423.37,265.07 L422.97,266.36 L422.56,267.21 L421.75,268.07 L420.54,268.50 L417.70,268.50 M426.21,259.50 L426.21,268.50 M426.21,259.50 L431.47,259.50 M426.21,263.79 L429.45,263.79 M426.21,268.50 L431.47,268.50 M433.50,259.50 L435.52,268.50 M437.55,259.50 L435.52,268.50 M437.55,259.50 L439.57,268.50 M441.60,259.50 L439.57,268.50 M446.05,259.50 L442.81,268.50 M446.05,259.50 L449.29,268.50 M444.03,265.50 L448.08,265.50 M451.32,259.50 L451.32,268.50 M451.32,268.50 L456.18,268.50 M458.20,259.50 L458.20,268.50 M463.87,259.50 L458.20,265.50 M460.23,263.36 L463.87,268.50" fill="none" stroke="#00FF00" stroke-width="1"/>
<path d="M830.90,261.64 L830.90,261.21 L831.31,260.36 L831.72,259.93 L832.52,259.50 L834.14,259.50 L834.96,259.93 L835.36,260.36 L835.76,261.21 L835.76,262.07 L835.36,262.93 L834.55,264.21 L830.50,268.50 L836.17,268.50 M841.03,259.50 L839.82,259.93 L839.00,261.21 L838.60,263.36 L838.60,264.64 L839.00,266.79 L839.82,268.07 L841.03,268.50 L841.84,268.50 L843.05,268.07 L843.87,266.79 L844.27,264.64 L844.27,263.36 L843.87,261.21 L843.05,259.93 L841.84,259.50 L841.03,259.50 M849.13,259.50 L847.91,259.93 L847.11,261.21 L846.70,263.36 L846.70,264.64 L847.11,266.79 L847.91,268.07 L849.13,268.50 L849.94,268.50 L851.15,268.07 L851.97,266.79 L852.37,264.64 L852.37,263.36 L851.97,261.21 L851.15,259.93 L849.94,259.50 L849.13,259.50" fill="none" stroke="#00FF00" stroke-width="1"/>
<path d="M868.17,260.79 L867.36,259.93 L866.14,259.50 L864.52,259.50 L863.31,259.93 L862.50,260.79 L862.50,261.64 L862.90,262.50 L863.31,262.93 L864.12,263.36 L866.55,264.21 L867.36,264.64 L867.76,265.07 L868.17,265.93 L868.17,267.21 L867.36,268.07 L866.14,268.50 L864.52,268.50 L863.31,268.07 L862.50,267.21 M871.00,259.50 L871.00,268.50 M871.00,259.50 L876.27,259.50 M871.00,263.79 L874.25,263.79" fill="none" stroke="#00FF00" stroke-width="1"/>
<ellipse cx="241" cy="291" rx="13.5" ry="13.5" fill="none" stroke="#FF00FF" stroke-width="1"/>
<path d="M243.36,287.79 L242.96,286.93 L241.74,286.50 L240.93,286.50 L239.72,286.93 L238.91,288.21 L238.50,290.36 L238.50,292.50 L238.91,294.21 L239.72,295.07 L240.93,295.50 L241.34,295.50 L242.55,295.07 L243.36,294.21 L243.76,292.93 L243.76,292.50 L243.36,291.21 L242.55,290.36 L241.34,289.93 L240.93,289.93 L239.72,290.36 L238.91,291.21 L238.50,292.50" fill="none" stroke="#00FF00" stroke-width="1"/>
<path d="M269.88,288.64 L269.47,287.79 L268.66,286.93 L267.85,286.50 L266.23,286.50 L265.42,286.93 L264.61,287.79 L264.20,288.64 L263.80,289.93 L263.80,292.07 L264.20,293.36 L264.61,294.21 L265.42,295.07 L266.23,295.50 L267.85,295.50 L268.66,295.07 L269.47,294.21 L269.88,293.36 M274.74,286.50 L273.93,286.93 L273.12,287.79 L272.71,288.64 L272.31,289.93 L272.31,292.07 L272.71,293.36 L273.12,294.21 L273.93,295.07 L274.74,295.50 L276.36,295.50 L277.17,295.07 L277.98,294.21 L278.38,293.36 L278.79,292.07 L278.79,289.93 L278.38,288.64 L277.98,287.79 L277.17,286.93 L276.36,286.50 L274.74,286.50 M281.62,286.50 L281.62,295.50 M281.62,286.50 L287.29,295.50 M287.29,286.50 L287.29,295.50 M295.80,287.79 L294.99,286.93 L293.77,286.50 L292.15,286.50 L290.94,286.93 L290.12,287.79 L290.12,288.64 L290.53,289.50 L290.94,289.93 L291.75,290.36 L294.18,291.21 L294.99,291.64 L295.39,292.07 L295.80,292.93 L295.80,294.21 L294.99,295.07 L293.77,295.50 L292.15,295.50 L290.94,295.07 L290.12,294.21 M300.25,286.50 L300.25,295.50 M297.42,286.50 L303.09,286.50 M305.11,286.50 L305.11,295.50 M305.11,286.50 L308.75,286.50 L309.97,286.93 L310.38,287.36 L310.78,288.21 L310.78,289.07 L310.38,289.93 L309.97,290.36 L308.75,290.79 L305.11,290.79 M307.94,290.79 L310.78,295.50 M313.62,286.50 L313.62,292.93 L314.02,294.21 L314.83,295.07 L316.05,295.50 L316.86,295.50 L318.07,295.07 L318.88,294.21 L319.29,292.93 L319.29,286.50 M328.20,288.64 L327.79,287.79 L326.98,286.93 L326.17,286.50 L324.55,286.50 L323.74,286.93 L322.93,287.79 L322.53,288.64 L322.12,289.93 L322.12,292.07 L322.53,293.36 L322.93,294.21 L323.74,295.07 L324.55,295.50 L326.17,295.50 L326.98,295.07 L327.79,294.21 L328.20,293.36 M332.65,286.50 L332.65,295.50 M329.81,286.50 L335.49,286.50 M348.45,286.50 L347.23,286.93 L346.83,287.79 L346.83,288.64 L347.23,289.50 L348.04,289.93 L349.66,290.36 L350.88,290.79 L351.69,291.64 L352.09,292.50 L352.09,293.79 L351.69,294.64 L351.28,295.07 L350.06,295.50 L348.45,295.50 L347.23,295.07 L346.83,294.64 L346.42,293.79 L346.42,292.50 L346.83,291.64 L347.63,290.79 L348.85,290.36 L350.47,289.93 L351.28,289.50 L351.69,288.64 L351.69,287.79 L351.28,286.93 L350.06,286.50 L348.45,286.50 M354.93,284.79 L354.93,288.21 M366.67,286.50 L368.70,295.50 M370.72,286.50 L368.70,295.50 M370.72,286.50 L372.75,295.50 M374.77,286.50 L372.75,295.50 M377.20,286.50 L377.20,295.50 M380.44,286.50 L380.44,295.50 M380.44,286.50 L383.28,286.50 L384.49,286.93 L385.30,287.79 L385.71,288.64 L386.11,289.93 L386.11,292.07 L385.71,293.36 L385.30,294.21 L384.49,295.07 L383.28,295.50 L380.44,295.50 M388.95,286.50 L388.95,295.50 M388.95,286.50 L394.21,286.50 M388.95,290.79 L392.19,290.79 M388.95,295.50 L394.21,295.50 M411.62,287.79 L410.82,286.93 L409.60,286.50 L407.98,286.50 L406.76,286.93 L405.96,287.79 L405.96,288.64 L406.36,289.50 L406.76,289.93 L407.58,290.36 L410.00,291.21 L410.82,291.64 L411.22,292.07 L411.62,292.93 L411.62,294.21 L410.82,295.07 L409.60,295.50 L407.98,295.50 L406.76,295.07 L405.96,294.21 M414.46,286.50 L414.46,295.50 M417.70,286.50 L417.70,295.50 M417.70,286.50 L420.54,286.50 L421.75,286.93 L422.56,287.79 L422.97,288.64 L423.37,289.93 L423.37,292.07 L422.97,293.36 L422.56,294.21 L421.75,295.07 L420.54,295.50 L417.70,295.50 M426.21,286.50 L426.21,295.50 M426.21,286.50 L431.47,286.50 M426.21,290.79 L429.45,290.79 M426.21,295.50 L431.47,295.50 M433.50,286.50 L435.52,295.50 M437.55,286.50 L435.52,295.50 M437.55,286.50 L439.57,295.50 M441.60,286.50 L439.57,295.50 M446.05,286.50 L442.81,295.50 M446.05,286.50 L449.29,295.50 M444.03,292.50 L448.08,292.50 M451.32,286.50 L451.32,295.50 M451.32,295.50 L456.18,295.50 M458.20,286.50 L458.20,295.50 M463.87,286.50 L458.20,292.50 M460.23,290.36 L463.87,295.50" fill="none" stroke="#00FF00" stroke-width="1"/>
<path d="M742.00,288.21 L742.81,287.79 L744.02,286.50 L744.02,295.50 M749.29,288.64 L749.29,288.21 L749.70,287.36 L750.10,286.93 L750.91,286.50 L752.53,286.50 L753.34,286.93 L753.75,287.36 L754.15,288.21 L754.15,289.07 L753.75,289.93 L752.93,291.21 L748.88,295.50 L754.55,295.50 M759.41,286.50 L758.20,286.93 L757.39,288.21 L756.99,290.36 L756.99,291.64 L757.39,293.79 L758.20,295.07 L759.41,295.50 L760.23,295.50 L761.44,295.07 L762.25,293.79 L762.65,291.64 L762.65,290.36 L762.25,288.21 L761.44,286.93 L760.23,286.50 L759.41,286.50 M767.51,286.50 L766.30,286.93 L765.49,288.21 L765.09,290.36 L765.09,291.64 L765.49,293.79 L766.30,295.07 L767.51,295.50 L768.33,295.50 L769.54,295.07 L770.35,293.79 L770.75,291.64 L770.75,290.36 L770.35,288.21 L769.54,286.93 L768.33,286.50 L767.51,286.50" fill="none" stroke="#00FF00" stroke-width="1"/>
<path d="M868.17,287.79 L867.36,286.93 L866.14,286.50 L864.52,286.50 L863.31,286.93 L862.50,287.79 L862.50,288.64 L862.90,289.50 L863.31,289.93 L864.12,290.36 L866.55,291.21 L867.36,291.64 L867.76,292.07 L868.17,292.93 L868.17,294.21 L867.36,295.07 L866.14,295.50 L864.52,295.50 L863.31,295.07 L862.50,294.21 M871.00,286.50 L871.00,295.50 M871.00,286.50 L876.27,286.50 M871.00,290.79 L874.25,290.79" fill="none" stroke="#00FF00" stroke-width="1"/>
<ellipse cx="241" cy="318" rx="13.5" ry="13.5" fill="none" stroke="#FF00FF" stroke-width="1"/>
<path d="M244.17,313.50 L240.12,322.50 M238.50,313.50 L244.17,313.50" fill="none" stroke="#00FF00" stroke-width="1"/>
<path d="M269.88,315.64 L269.47,314.79 L268.66,313.93 L267.85,313.50 L266.23,313.50 L265.42,313.93 L264.61,314.79 L264.20,315.64 L263.80,316.93 L263.80,319.07 L264.20,320.36 L264.61,321.21 L265.42,322.07 L266.23,322.50 L267.85,322.50 L268.66,322.07 L269.47,321.21 L269.88,320.36 M274.74,313.50 L273.93,313.93 L273.12,314.79 L272.71,315.64 L272.31,316.93 L272.31,319.07 L272.71,320.36 L273.12,321.21 L273.93,322.07 L274.74,322.50 L276.36,322.50 L277.17,322.07 L277.98,321.21 L278.38,320.36 L278.79,319.07 L278.79,316.93 L278.38,315.64 L277.98,314.79 L277.17,313.93 L276.36,313.50 L274.74,313.50 M281.62,313.50 L281.62,322.50 M281.62,313.50 L287.29,322.50 M287.29,313.50 L287.29,322.50 M295.80,314.79 L294.99,313.93 L293.77,313.50 L292.15,313.50 L290.94,313.93 L290.12,314.79 L290.12,315.64 L290.53,316.50 L290.94,316.93 L291.75,317.36 L294.18,318.21 L294.99,318.64 L295.39,319.07 L295.80,319.93 L295.80,321.21 L294.99,322.07 L293.77,322.50 L292.15,322.50 L290.94,322.07 L290.12,321.21 M300.25,313.50 L300.25,322.50 M297.42,313.50 L303.09,313.50 M305.11,313.50 L305.11,322.50 M305.11,313.50 L308.75,313.50 L309.97,313.93 L310.38,314.36 L310.78,315.21 L310.78,316.07 L310.38,316.93 L309.97,317.36 L308.75,317.79 L305.11,317.79 M307.94,317.79 L310.78,322.50 M313.62,313.50 L313.62,319.93 L314.02,321.21 L314.83,322.07 L316.05,322.50 L316.86,322.50 L318.07,322.07 L318.88,321.21 L319.29,319.93 L319.29,313.50 M328.20,315.64 L327.79,314.79 L326.98,313.93 L326.17,313.50 L324.55,313.50 L323.74,313.93 L322.93,314.79 L322.53,315.64 L322.12,316.93 L322.12,319.07 L322.53,320.36 L322.93,321.21 L323.74,322.07 L324.55,322.50 L326.17,322.50 L326.98,322.07 L327.79,321.21 L328.20,320.36 M332.65,313.50 L332.65,322.50 M329.81,313.50 L335.49,313.50 M346.83,313.50 L346.83,322.50 M352.50,313.50 L352.50,322.50 M346.83,317.79 L352.50,317.79 M361.41,315.64 L361.00,314.79 L360.19,313.93 L359.38,313.50 L357.76,313.50 L356.95,313.93 L356.14,314.79 L355.74,315.64 L355.33,316.93 L355.33,319.07 L355.74,320.36 L356.14,321.21 L356.95,322.07 L357.76,322.50 L359.38,322.50 L360.19,322.07 L361.00,321.21 L361.41,320.36 M373.56,313.50 L373.56,322.50 M373.56,313.50 L377.20,313.50 L378.42,313.93 L378.82,314.36 L379.23,315.21 L379.23,316.07 L378.82,316.93 L378.42,317.36 L377.20,317.79 L373.56,317.79 M376.39,317.79 L379.23,322.50 M384.09,313.50 L380.85,322.50 M384.09,313.50 L387.33,322.50 M382.06,319.50 L386.11,319.50 M389.35,313.50 L389.35,322.50 M389.35,313.50 L392.59,322.50 M395.83,313.50 L392.59,322.50 M395.83,313.50 L395.83,322.50 M399.07,313.50 L399.07,322.50 M399.07,313.50 L402.72,313.50 L403.93,313.93 L404.34,314.36 L404.74,315.21 L404.74,316.50 L404.34,317.36 L403.93,317.79 L402.72,318.21 L399.07,318.21 M416.89,313.50 L416.89,322.50 M416.89,313.50 L420.54,313.50 L421.75,313.93 L422.16,314.36 L422.56,315.21 L422.56,316.50 L422.16,317.36 L421.75,317.79 L420.54,318.21 L416.89,318.21 M425.39,313.50 L425.39,322.50 M425.39,313.50 L430.66,313.50 M425.39,317.79 L428.63,317.79 M425.39,322.50 L430.66,322.50 M433.50,313.50 L433.50,322.50 M433.50,313.50 L437.14,313.50 L438.36,313.93 L438.76,314.36 L439.17,315.21 L439.17,316.07 L438.76,316.93 L438.36,317.36 L437.14,317.79 L433.50,317.79 M436.33,317.79 L439.17,322.50 M453.34,313.50 L450.10,322.50 M453.34,313.50 L456.58,322.50 M451.32,319.50 L455.37,319.50 M458.61,313.50 L458.61,322.50 M458.61,313.50 L461.44,313.50 L462.66,313.93 L463.47,314.79 L463.87,315.64 L464.28,316.93 L464.28,319.07 L463.87,320.36 L463.47,321.21 L462.66,322.07 L461.44,322.50 L458.61,322.50 M469.13,313.50 L465.90,322.50 M469.13,313.50 L472.38,322.50 M467.11,319.50 L471.16,319.50" fill="none" stroke="#00FF00" stroke-width="1"/>
<path d="M768.80,315.21 L769.61,314.79 L770.82,313.50 L770.82,322.50" fill="none" stroke="#00FF00" stroke-width="1"/>
<path d="M863.20,313.50 L863.20,322.50 M863.20,313.50 L868.47,313.50 M863.20,317.79 L866.44,317.79 M863.20,322.50 L868.47,322.50 M873.33,313.50 L870.09,322.50 M873.33,313.50 L876.57,322.50 M871.30,319.50 L875.35,319.50" fill="none" stroke="#00FF00" stroke-width="1"/>
<ellipse cx="241" cy="345" rx="13.5" ry="13.5" fill="none" stroke="#FF00FF" stroke-width="1"/>
<path d="M243.76,343.50 L243.36,344.79 L242.55,345.64 L241.34,346.07 L240.93,346.07 L239.72,345.64 L238.91,344.79 L238.50,343.50 L238.50,343.07 L238.91,341.79 L239.72,340.93 L240.93,340.50 L241.34,340.50 L242.55,340.93 L243.36,341.79 L243.76,343.50 L243.76,345.64 L243.36,347.79 L242.55,349.07 L241.34,349.50 L240.53,349.50 L239.31,349.07 L238.91,348.21" fill="none" stroke="#00FF00" stroke-width="1"/>
<path d="M266.63,340.50 L266.63,349.50 M263.80,340.50 L269.47,340.50 M271.50,340.50 L271.50,349.50 M271.50,340.50 L275.14,340.50 L276.36,340.93 L276.76,341.36 L277.17,342.21 L277.17,343.07 L276.76,343.93 L276.36,344.36 L275.14,344.79 L271.50,344.79 M274.33,344.79 L277.17,349.50 M282.03,340.50 L278.79,349.50 M282.03,340.50 L285.26,349.50 M280.00,346.50 L284.05,346.50 M292.56,341.79 L291.75,340.93 L290.53,340.50 L288.91,340.50 L287.69,340.93 L286.88,341.79 L286.88,342.64 L287.29,343.50 L287.69,343.93 L288.50,344.36 L290.94,345.21 L291.75,345.64 L292.15,346.07 L292.56,346.93 L292.56,348.21 L291.75,349.07 L290.53,349.50 L288.91,349.50 L287.69,349.07 L286.88,348.21 M295.39,340.50 L295.39,349.50 M301.06,340.50 L301.06,349.50 M295.39,344.79 L301.06,344.79 M313.62,340.50 L313.62,349.50 M313.62,340.50 L318.88,340.50 M313.62,344.79 L316.86,344.79 M313.62,349.50 L318.88,349.50 M321.72,340.50 L321.72,349.50 M321.72,340.50 L327.38,349.50 M327.38,340.50 L327.38,349.50 M336.30,342.64 L335.89,341.79 L335.08,340.93 L334.27,340.50 L332.65,340.50 L331.84,340.93 L331.03,341.79 L330.62,342.64 L330.22,343.93 L330.22,346.07 L330.62,347.36 L331.03,348.21 L331.84,349.07 L332.65,349.50 L334.27,349.50 L335.08,349.07 L335.89,348.21 L336.30,347.36 M339.13,340.50 L339.13,349.50 M339.13,349.50 L343.99,349.50 M348.04,340.50 L347.23,340.93 L346.42,341.79 L346.01,342.64 L345.61,343.93 L345.61,346.07 L346.01,347.36 L346.42,348.21 L347.23,349.07 L348.04,349.50 L349.66,349.50 L350.47,349.07 L351.28,348.21 L351.69,347.36 L352.09,346.07 L352.09,343.93 L351.69,342.64 L351.28,341.79 L350.47,340.93 L349.66,340.50 L348.04,340.50 M360.19,341.79 L359.38,340.93 L358.17,340.50 L356.55,340.50 L355.33,340.93 L354.52,341.79 L354.52,342.64 L354.93,343.50 L355.33,343.93 L356.14,344.36 L358.57,345.21 L359.38,345.64 L359.79,346.07 L360.19,346.93 L360.19,348.21 L359.38,349.07 L358.17,349.50 L356.55,349.50 L355.33,349.07 L354.52,348.21 M363.03,340.50 L363.03,346.93 L363.43,348.21 L364.24,349.07 L365.46,349.50 L366.26,349.50 L367.48,349.07 L368.29,348.21 L368.70,346.93 L368.70,340.50 M371.94,340.50 L371.94,349.50 M371.94,340.50 L375.58,340.50 L376.80,340.93 L377.20,341.36 L377.61,342.21 L377.61,343.07 L377.20,343.93 L376.80,344.36 L375.58,344.79 L371.94,344.79 M374.77,344.79 L377.61,349.50 M380.44,340.50 L380.44,349.50 M380.44,340.50 L385.71,340.50 M380.44,344.79 L383.68,344.79 M380.44,349.50 L385.71,349.50 M397.86,340.50 L397.86,349.50 M397.86,340.50 L401.50,340.50 L402.72,340.93 L403.12,341.36 L403.53,342.21 L403.53,343.50 L403.12,344.36 L402.72,344.79 L401.50,345.21 L397.86,345.21 M406.36,340.50 L406.36,349.50 M406.36,340.50 L411.62,340.50 M406.36,344.79 L409.60,344.79 M406.36,349.50 L411.62,349.50 M414.46,340.50 L414.46,349.50 M414.46,340.50 L418.11,340.50 L419.32,340.93 L419.73,341.36 L420.13,342.21 L420.13,343.07 L419.73,343.93 L419.32,344.36 L418.11,344.79 L414.46,344.79 M417.30,344.79 L420.13,349.50 M437.95,342.64 L437.55,341.79 L436.74,340.93 L435.93,340.50 L434.31,340.50 L433.50,340.93 L432.69,341.79 L432.28,342.64 L431.88,343.93 L431.88,346.07 L432.28,347.36 L432.69,348.21 L433.50,349.07 L434.31,349.50 L435.93,349.50 L436.74,349.07 L437.55,348.21 L437.95,347.36 M440.79,340.50 L440.79,349.50 M445.64,340.50 L445.64,349.50 M442.81,340.50 L448.48,340.50 M449.29,340.50 L452.53,344.79 L452.53,349.50 M455.77,340.50 L452.53,344.79" fill="none" stroke="#00FF00" stroke-width="1"/>
<path d="M850.20,342.21 L851.01,341.79 L852.23,340.50 L852.23,349.50" fill="none" stroke="#00FF00" stroke-width="1"/>
<path d="M863.20,340.50 L863.20,349.50 M863.20,340.50 L868.47,340.50 M863.20,344.79 L866.44,344.79 M863.20,349.50 L868.47,349.50 M873.33,340.50 L870.09,349.50 M873.33,340.50 L876.57,349.50 M871.30,346.50 L875.35,346.50" fill="none" stroke="#00FF00" stroke-width="1"/>
<ellipse cx="241" cy="372" rx="13.5" ry="13.5" fill="none" stroke="#FF00FF" stroke-width="1"/>
<path d="M235.50,370.21 L236.31,369.79 L237.53,368.50 L237.53,377.50 M244.81,368.50 L243.60,368.93 L242.79,370.21 L242.38,372.36 L242.38,373.64 L242.79,375.79 L243.60,377.07 L244.81,377.50 L245.62,377.50 L246.84,377.07 L247.65,375.79 L248.06,373.64 L248.06,372.36 L247.65,370.21 L246.84,368.93 L245.62,368.50 L244.81,368.50" fill="none" stroke="#00FF00" stroke-width="1"/>
<path d="M267.04,368.50 L263.80,377.50 M267.04,368.50 L270.28,377.50 M265.01,374.50 L269.06,374.50 M272.31,368.50 L272.31,377.50 M272.31,368.50 L275.14,368.50 L276.36,368.93 L277.17,369.79 L277.57,370.64 L277.98,371.93 L277.98,374.07 L277.57,375.36 L277.17,376.21 L276.36,377.07 L275.14,377.50 L272.31,377.50 M284.05,368.50 L284.05,375.36 L283.65,376.64 L283.24,377.07 L282.43,377.50 L281.62,377.50 L280.81,377.07 L280.41,376.64 L280.00,375.36 L280.00,374.50 M287.29,368.50 L287.29,374.93 L287.69,376.21 L288.50,377.07 L289.72,377.50 L290.53,377.50 L291.75,377.07 L292.56,376.21 L292.96,374.93 L292.96,368.50 M301.47,369.79 L300.66,368.93 L299.44,368.50 L297.82,368.50 L296.61,368.93 L295.80,369.79 L295.80,370.64 L296.20,371.50 L296.61,371.93 L297.42,372.36 L299.85,373.21 L300.66,373.64 L301.06,374.07 L301.47,374.93 L301.47,376.21 L300.66,377.07 L299.44,377.50 L297.82,377.50 L296.61,377.07 L295.80,376.21 M305.92,368.50 L305.92,377.50 M303.09,368.50 L308.75,368.50 M319.29,368.50 L321.31,377.50 M323.34,368.50 L321.31,377.50 M323.34,368.50 L325.36,377.50 M327.38,368.50 L325.36,377.50 M331.84,368.50 L328.60,377.50 M331.84,368.50 L335.08,377.50 M329.81,374.50 L333.87,374.50 M338.73,368.50 L338.73,377.50 M335.89,368.50 L341.56,368.50 M343.59,368.50 L343.59,377.50 M343.59,368.50 L348.85,368.50 M343.59,372.79 L346.83,372.79 M343.59,377.50 L348.85,377.50 M351.69,368.50 L351.69,377.50 M351.69,368.50 L355.33,368.50 L356.55,368.93 L356.95,369.36 L357.36,370.21 L357.36,371.07 L356.95,371.93 L356.55,372.36 L355.33,372.79 L351.69,372.79 M354.52,372.79 L357.36,377.50 M368.29,368.50 L371.53,377.50 M374.77,368.50 L371.53,377.50 M378.82,368.50 L375.58,377.50 M378.82,368.50 L382.06,377.50 M376.80,374.50 L380.85,374.50 M384.09,368.50 L384.09,377.50 M384.09,377.50 L388.95,377.50 M389.75,368.50 L393.00,377.50 M396.24,368.50 L393.00,377.50 M398.26,368.50 L398.26,377.50 M398.26,368.50 L403.53,368.50 M398.26,372.79 L401.50,372.79 M398.26,377.50 L403.53,377.50 M421.35,370.64 L420.94,369.79 L420.13,368.93 L419.32,368.50 L417.70,368.50 L416.89,368.93 L416.08,369.79 L415.68,370.64 L415.27,371.93 L415.27,374.07 L415.68,375.36 L416.08,376.21 L416.89,377.07 L417.70,377.50 L419.32,377.50 L420.13,377.07 L420.94,376.21 L421.35,375.36 M426.21,368.50 L422.97,377.50 M426.21,368.50 L429.45,377.50 M424.18,374.50 L428.23,374.50 M431.47,368.50 L431.47,377.50 M431.47,368.50 L435.12,368.50 L436.33,368.93 L436.74,369.36 L437.14,370.21 L437.14,371.50 L436.74,372.36 L436.33,372.79 L435.12,373.21 L431.47,373.21" fill="none" stroke="#00FF00" stroke-width="1"/>
<path d="M768.80,370.21 L769.61,369.79 L770.82,368.50 L770.82,377.50" fill="none" stroke="#00FF00" stroke-width="1"/>
<path d="M863.20,368.50 L863.20,377.50 M863.20,368.50 L868.47,368.50 M863.20,372.79 L866.44,372.79 M863.20,377.50 L868.47,377.50 M873.33,368.50 L870.09,377.50 M873.33,368.50 L876.57,377.50 M871.30,374.50 L875.35,374.50" fill="none" stroke="#00FF00" stroke-width="1"/>
<path d="M241.80,422.50 L243.83,431.50 M245.85,422.50 L243.83,431.50 M245.85,422.50 L247.88,431.50 M249.90,422.50 L247.88,431.50 M254.36,422.50 L251.12,431.50 M254.36,422.50 L257.60,431.50 M252.33,428.50 L256.38,428.50 M261.24,422.50 L261.24,431.50 M258.41,422.50 L264.07,422.50 M266.10,422.50 L266.10,431.50 M266.10,422.50 L271.37,422.50 M266.10,426.79 L269.34,426.79 M266.10,431.50 L271.37,431.50 M274.20,422.50 L274.20,431.50 M274.20,422.50 L277.85,422.50 L279.06,422.93 L279.47,423.36 L279.87,424.21 L279.87,425.07 L279.47,425.93 L279.06,426.36 L277.85,426.79 L274.20,426.79 M277.04,426.79 L279.87,431.50 M292.02,422.50 L292.02,431.50 M292.02,422.50 L297.69,431.50 M297.69,422.50 L297.69,431.50 M302.96,422.50 L302.15,422.93 L301.34,423.79 L300.93,424.64 L300.53,425.93 L300.53,428.07 L300.93,429.36 L301.34,430.21 L302.15,431.07 L302.96,431.50 L304.58,431.50 L305.38,431.07 L306.20,430.21 L306.60,429.36 L307.00,428.07 L307.00,425.93 L306.60,424.64 L306.20,423.79 L305.38,422.93 L304.58,422.50 L302.96,422.50 M311.46,422.50 L311.46,431.50 M308.62,422.50 L314.30,422.50 M316.32,422.50 L316.32,431.50 M316.32,422.50 L321.59,422.50 M316.32,426.79 L319.56,426.79 M316.32,431.50 L321.59,431.50 M329.69,423.79 L328.88,422.93 L327.66,422.50 L326.04,422.50 L324.83,422.93 L324.01,423.79 L324.01,424.64 L324.42,425.50 L324.83,425.93 L325.63,426.36 L328.06,427.21 L328.88,427.64 L329.28,428.07 L329.69,428.93 L329.69,430.21 L328.88,431.07 L327.66,431.50 L326.04,431.50 L324.83,431.07 L324.01,430.21" fill="none" stroke="#00FF00" stroke-width="1"/>
<rect x="227.5" y="440.5" width="27" height="27" fill="none" stroke="#FF00FF" stroke-width="1"/>
<path d="M243.36,449.50 L239.31,449.50 L238.91,453.36 L239.31,452.93 L240.53,452.50 L241.74,452.50 L242.96,452.93 L243.76,453.79 L244.17,455.07 L244.17,455.93 L243.76,457.21 L242.96,458.07 L241.74,458.50 L240.53,458.50 L239.31,458.07 L238.91,457.64 L238.50,456.79" fill="none" stroke="#00FF00" stroke-width="1"/>
<path d="M269.92,450.79 L269.11,449.93 L267.89,449.50 L266.27,449.50 L265.06,449.93 L264.25,450.79 L264.25,451.64 L264.65,452.50 L265.06,452.93 L265.87,453.36 L268.30,454.21 L269.11,454.64 L269.51,455.07 L269.92,455.93 L269.92,457.21 L269.11,458.07 L267.89,458.50 L266.27,458.50 L265.06,458.07 L264.25,457.21 M272.75,449.50 L272.75,458.50 M272.75,449.50 L278.02,449.50 M272.75,453.79 L276.00,453.79 M272.75,458.50 L278.02,458.50 M280.86,449.50 L280.86,458.50 M280.86,449.50 L286.12,449.50 M280.86,453.79 L284.10,453.79 M280.86,458.50 L286.12,458.50 M298.27,449.50 L298.27,455.93 L298.68,457.21 L299.49,458.07 L300.70,458.50 L301.51,458.50 L302.73,458.07 L303.54,457.21 L303.94,455.93 L303.94,449.50 M308.80,449.50 L308.80,458.50 M305.97,449.50 L311.63,449.50 M313.66,449.50 L313.66,458.50 M316.90,449.50 L316.90,458.50 M316.90,458.50 L321.76,458.50 M323.79,449.50 L323.79,458.50 M328.64,449.50 L328.64,458.50 M325.81,449.50 L331.48,449.50 M332.29,449.50 L335.53,453.79 L335.53,458.50 M338.77,449.50 L335.53,453.79 M350.11,449.50 L350.11,458.50 M350.11,449.50 L353.75,449.50 L354.97,449.93 L355.38,450.36 L355.78,451.21 L355.78,452.50 L355.38,453.36 L354.97,453.79 L353.75,454.21 L350.11,454.21 M358.62,449.50 L358.62,458.50 M358.62,458.50 L363.48,458.50 M367.52,449.50 L364.29,458.50 M367.52,449.50 L370.76,458.50 M365.50,455.50 L369.55,455.50 M372.79,449.50 L372.79,458.50 M372.79,449.50 L378.46,458.50 M378.46,449.50 L378.46,458.50 M391.01,449.50 L391.01,458.50 M391.01,449.50 L396.28,449.50 M391.01,453.79 L394.25,453.79 M400.74,449.50 L399.93,449.93 L399.12,450.79 L398.71,451.64 L398.31,452.93 L398.31,455.07 L398.71,456.36 L399.12,457.21 L399.93,458.07 L400.74,458.50 L402.36,458.50 L403.17,458.07 L403.98,457.21 L404.38,456.36 L404.78,455.07 L404.78,452.93 L404.38,451.64 L403.98,450.79 L403.17,449.93 L402.36,449.50 L400.74,449.50 M407.62,449.50 L407.62,458.50 M407.62,449.50 L411.26,449.50 L412.48,449.93 L412.88,450.36 L413.29,451.21 L413.29,452.07 L412.88,452.93 L412.48,453.36 L411.26,453.79 L407.62,453.79 M410.46,453.79 L413.29,458.50 M431.11,451.64 L430.71,450.79 L429.89,449.93 L429.09,449.50 L427.47,449.50 L426.65,449.93 L425.85,450.79 L425.44,451.64 L425.03,452.93 L425.03,455.07 L425.44,456.36 L425.85,457.21 L426.65,458.07 L427.47,458.50 L429.09,458.50 L429.89,458.07 L430.71,457.21 L431.11,456.36 M435.97,449.50 L435.16,449.93 L434.35,450.79 L433.95,451.64 L433.54,452.93 L433.54,455.07 L433.95,456.36 L434.35,457.21 L435.16,458.07 L435.97,458.50 L437.59,458.50 L438.40,458.07 L439.21,457.21 L439.62,456.36 L440.02,455.07 L440.02,452.93 L439.62,451.64 L439.21,450.79 L438.40,449.93 L437.59,449.50 L435.97,449.50 M442.86,449.50 L442.86,458.50 M442.86,449.50 L448.52,458.50 M448.52,449.50 L448.52,458.50 M457.03,450.79 L456.22,449.93 L455.00,449.50 L453.38,449.50 L452.17,449.93 L451.36,450.79 L451.36,451.64 L451.76,452.50 L452.17,452.93 L452.98,453.36 L455.41,454.21 L456.22,454.64 L456.62,455.07 L457.03,455.93 L457.03,457.21 L456.22,458.07 L455.00,458.50 L453.38,458.50 L452.17,458.07 L451.36,457.21 M461.49,449.50 L461.49,458.50 M458.65,449.50 L464.32,449.50 M466.35,449.50 L466.35,458.50 M466.35,449.50 L469.99,449.50 L471.21,449.93 L471.61,450.36 L472.01,451.21 L472.01,452.07 L471.61,452.93 L471.21,453.36 L469.99,453.79 L466.35,453.79 M469.18,453.79 L472.01,458.50 M474.85,449.50 L474.85,455.93 L475.25,457.21 L476.07,458.07 L477.28,458.50 L478.09,458.50 L479.31,458.07 L480.12,457.21 L480.52,455.93 L480.52,449.50 M489.43,451.64 L489.02,450.79 L488.22,449.93 L487.40,449.50 L485.79,449.50 L484.98,449.93 L484.17,450.79 L483.76,451.64 L483.36,452.93 L483.36,455.07 L483.76,456.36 L484.17,457.21 L484.98,458.07 L485.79,458.50 L487.40,458.50 L488.22,458.07 L489.02,457.21 L489.43,456.36 M493.88,449.50 L493.88,458.50 M491.05,449.50 L496.72,449.50 M498.75,449.50 L498.75,458.50 M504.01,449.50 L503.20,449.93 L502.39,450.79 L501.99,451.64 L501.58,452.93 L501.58,455.07 L501.99,456.36 L502.39,457.21 L503.20,458.07 L504.01,458.50 L505.63,458.50 L506.44,458.07 L507.25,457.21 L507.66,456.36 L508.06,455.07 L508.06,452.93 L507.66,451.64 L507.25,450.79 L506.44,449.93 L505.63,449.50 L504.01,449.50 M510.89,449.50 L510.89,458.50 M510.89,449.50 L516.57,458.50 M516.57,449.50 L516.57,458.50" fill="none" stroke="#00FF00" stroke-width="1"/>
<path d="M246.47,505.79 L245.66,504.93 L244.45,504.50 L242.83,504.50 L241.61,504.93 L240.80,505.79 L240.80,506.64 L241.21,507.50 L241.61,507.93 L242.42,508.36 L244.85,509.21 L245.66,509.64 L246.06,510.07 L246.47,510.93 L246.47,512.21 L245.66,513.07 L244.45,513.50 L242.83,513.50 L241.61,513.07 L240.80,512.21 M249.31,504.50 L249.31,513.50 M249.31,504.50 L254.57,504.50 M249.31,508.79 L252.55,508.79 M249.31,513.50 L254.57,513.50 M256.60,504.50 L258.62,513.50 M260.65,504.50 L258.62,513.50 M260.65,504.50 L262.67,513.50 M264.69,504.50 L262.67,513.50 M267.12,504.50 L267.12,513.50 M267.12,504.50 L272.39,504.50 M267.12,508.79 L270.37,508.79 M267.12,513.50 L272.39,513.50 M275.23,504.50 L275.23,513.50 M275.23,504.50 L278.87,504.50 L280.09,504.93 L280.49,505.36 L280.90,506.21 L280.90,507.07 L280.49,507.93 L280.09,508.36 L278.87,508.79 L275.23,508.79 M278.06,508.79 L280.90,513.50 M293.05,504.50 L293.05,513.50 M293.05,504.50 L298.72,513.50 M298.72,504.50 L298.72,513.50 M303.98,504.50 L303.17,504.93 L302.36,505.79 L301.96,506.64 L301.55,507.93 L301.55,510.07 L301.96,511.36 L302.36,512.21 L303.17,513.07 L303.98,513.50 L305.60,513.50 L306.41,513.07 L307.22,512.21 L307.62,511.36 L308.03,510.07 L308.03,507.93 L307.62,506.64 L307.22,505.79 L306.41,504.93 L305.60,504.50 L303.98,504.50 M312.49,504.50 L312.49,513.50 M309.65,504.50 L315.32,504.50 M317.35,504.50 L317.35,513.50 M317.35,504.50 L322.61,504.50 M317.35,508.79 L320.59,508.79 M317.35,513.50 L322.61,513.50 M330.71,505.79 L329.90,504.93 L328.69,504.50 L327.06,504.50 L325.85,504.93 L325.04,505.79 L325.04,506.64 L325.45,507.50 L325.85,507.93 L326.66,508.36 L329.09,509.21 L329.90,509.64 L330.31,510.07 L330.71,510.93 L330.71,512.21 L329.90,513.07 L328.69,513.50 L327.06,513.50 L325.85,513.07 L325.04,512.21" fill="none" stroke="#00FF00" stroke-width="1"/>
<polygon points="241,522.5 255,536 241,549.5 227,536" fill="none" stroke="#FF00FF" stroke-width="0.75"/>
<path d="M243.36,531.50 L239.31,531.50 L238.91,535.36 L239.31,534.93 L240.53,534.50 L241.74,534.50 L242.96,534.93 L243.76,535.79 L244.17,537.07 L244.17,537.93 L243.76,539.21 L242.96,540.07 L241.74,540.50 L240.53,540.50 L239.31,540.07 L238.91,539.64 L238.50,538.79" fill="none" stroke="#00FF00" stroke-width="1"/>
<path d="M269.92,532.79 L269.11,531.93 L267.89,531.50 L266.27,531.50 L265.06,531.93 L264.25,532.79 L264.25,533.64 L264.65,534.50 L265.06,534.93 L265.87,535.36 L268.30,536.21 L269.11,536.64 L269.51,537.07 L269.92,537.93 L269.92,539.21 L269.11,540.07 L267.89,540.50 L266.27,540.50 L265.06,540.07 L264.25,539.21 M272.75,531.50 L272.75,540.50 M272.75,531.50 L278.02,531.50 M272.75,535.79 L276.00,535.79 M272.75,540.50 L278.02,540.50 M280.86,531.50 L280.86,540.50 M280.86,531.50 L286.12,531.50 M280.86,535.79 L284.10,535.79 M280.86,540.50 L286.12,540.50 M298.27,531.50 L298.27,537.93 L298.68,539.21 L299.49,540.07 L300.70,540.50 L301.51,540.50 L302.73,540.07 L303.54,539.21 L303.94,537.93 L303.94,531.50 M308.80,531.50 L308.80,540.50 M305.97,531.50 L311.63,531.50 M313.66,531.50 L313.66,540.50 M316.90,531.50 L316.90,540.50 M316.90,540.50 L321.76,540.50 M323.79,531.50 L323.79,540.50 M328.64,531.50 L328.64,540.50 M325.81,531.50 L331.48,531.50 M332.29,531.50 L335.53,535.79 L335.53,540.50 M338.77,531.50 L335.53,535.79 M350.11,531.50 L350.11,540.50 M350.11,531.50 L353.75,531.50 L354.97,531.93 L355.38,532.36 L355.78,533.21 L355.78,534.50 L355.38,535.36 L354.97,535.79 L353.75,536.21 L350.11,536.21 M358.62,531.50 L358.62,540.50 M358.62,540.50 L363.48,540.50 M367.52,531.50 L364.29,540.50 M367.52,531.50 L370.76,540.50 M365.50,537.50 L369.55,537.50 M372.79,531.50 L372.79,540.50 M372.79,531.50 L378.46,540.50 M378.46,531.50 L378.46,540.50 M391.01,531.50 L391.01,540.50 M391.01,531.50 L396.28,531.50 M391.01,535.79 L394.25,535.79 M400.74,531.50 L399.93,531.93 L399.12,532.79 L398.71,533.64 L398.31,534.93 L398.31,537.07 L398.71,538.36 L399.12,539.21 L399.93,540.07 L400.74,540.50 L402.36,540.50 L403.17,540.07 L403.98,539.21 L404.38,538.36 L404.78,537.07 L404.78,534.93 L404.38,533.64 L403.98,532.79 L403.17,531.93 L402.36,531.50 L400.74,531.50 M407.62,531.50 L407.62,540.50 M407.62,531.50 L411.26,531.50 L412.48,531.93 L412.88,532.36 L413.29,533.21 L413.29,534.07 L412.88,534.93 L412.48,535.36 L411.26,535.79 L407.62,535.79 M410.46,535.79 L413.29,540.50 M431.11,533.64 L430.71,532.79 L429.89,531.93 L429.09,531.50 L427.47,531.50 L426.65,531.93 L425.85,532.79 L425.44,533.64 L425.03,534.93 L425.03,537.07 L425.44,538.36 L425.85,539.21 L426.65,540.07 L427.47,540.50 L429.09,540.50 L429.89,540.07 L430.71,539.21 L431.11,538.36 M435.97,531.50 L435.16,531.93 L434.35,532.79 L433.95,533.64 L433.54,534.93 L433.54,537.07 L433.95,538.36 L434.35,539.21 L435.16,540.07 L435.97,540.50 L437.59,540.50 L438.40,540.07 L439.21,539.21 L439.62,538.36 L440.02,537.07 L440.02,534.93 L439.62,533.64 L439.21,532.79 L438.40,531.93 L437.59,531.50 L435.97,531.50 M442.86,531.50 L442.86,540.50 M442.86,531.50 L448.52,540.50 M448.52,531.50 L448.52,540.50 M457.03,532.79 L456.22,531.93 L455.00,531.50 L453.38,531.50 L452.17,531.93 L451.36,532.79 L451.36,533.64 L451.76,534.50 L452.17,534.93 L452.98,535.36 L455.41,536.21 L456.22,536.64 L456.62,537.07 L457.03,537.93 L457.03,539.21 L456.22,540.07 L455.00,540.50 L453.38,540.50 L452.17,540.07 L451.36,539.21 M461.49,531.50 L461.49,540.50 M458.65,531.50 L464.32,531.50 M466.35,531.50 L466.35,540.50 M466.35,531.50 L469.99,531.50 L471.21,531.93 L471.61,532.36 L472.01,533.21 L472.01,534.07 L471.61,534.93 L471.21,535.36 L469.99,535.79 L466.35,535.79 M469.18,535.79 L472.01,540.50 M474.85,531.50 L474.85,537.93 L475.25,539.21 L476.07,540.07 L477.28,540.50 L478.09,540.50 L479.31,540.07 L480.12,539.21 L480.52,537.93 L480.52,531.50 M489.43,533.64 L489.02,532.79 L488.22,531.93 L487.40,531.50 L485.79,531.50 L484.98,531.93 L484.17,532.79 L483.76,533.64 L483.36,534.93 L483.36,537.07 L483.76,538.36 L484.17,539.21 L484.98,540.07 L485.79,540.50 L487.40,540.50 L488.22,540.07 L489.02,539.21 L489.43,538.36 M493.88,531.50 L493.88,540.50 M491.05,531.50 L496.72,531.50 M498.75,531.50 L498.75,540.50 M504.01,531.50 L503.20,531.93 L502.39,532.79 L501.99,533.64 L501.58,534.93 L501.58,537.07 L501.99,538.36 L502.39,539.21 L503.20,540.07 L504.01,540.50 L505.63,540.50 L506.44,540.07 L507.25,539.21 L507.66,538.36 L508.06,537.07 L508.06,534.93 L507.66,533.64 L507.25,532.79 L506.44,531.93 L505.63,531.50 L504.01,531.50 M510.89,531.50 L510.89,540.50 M510.89,531.50 L516.57,540.50 M516.57,531.50 L516.57,540.50" fill="none" stroke="#00FF00" stroke-width="1"/>
<polyline points="-5,206.7 44.7,183.5 140.6,229.3" fill="none" stroke="#FFFF00" stroke-width="1"/>
<rect x="2" y="229" width="139" height="1" fill="#FFFF00"/>
<line x1="5.5" y1="201.8" x2="5.5" y2="229" stroke="#FFFF00" stroke-width="1"/>
<line x1="12.5" y1="198.5" x2="12.5" y2="229" stroke="#FFFF00" stroke-width="1"/>
<line x1="19.5" y1="195.2" x2="19.5" y2="229" stroke="#FFFF00" stroke-width="1"/>
<line x1="26.5" y1="192.0" x2="26.5" y2="229" stroke="#FFFF00" stroke-width="1"/>
<line x1="33.5" y1="188.7" x2="33.5" y2="229" stroke="#FFFF00" stroke-width="1"/>
<line x1="39.5" y1="185.9" x2="39.5" y2="229" stroke="#FFFF00" stroke-width="1"/>
<line x1="46.5" y1="184.4" x2="46.5" y2="229" stroke="#FFFF00" stroke-width="1"/>
<line x1="53.5" y1="187.7" x2="53.5" y2="229" stroke="#FFFF00" stroke-width="1"/>
<line x1="60.5" y1="191.0" x2="60.5" y2="229" stroke="#FFFF00" stroke-width="1"/>
<line x1="67.5" y1="194.4" x2="67.5" y2="229" stroke="#FFFF00" stroke-width="1"/>
<line x1="74.5" y1="197.7" x2="74.5" y2="229" stroke="#FFFF00" stroke-width="1"/>
<line x1="80.5" y1="200.6" x2="80.5" y2="229" stroke="#FFFF00" stroke-width="1"/>
<line x1="87.5" y1="203.9" x2="87.5" y2="229" stroke="#FFFF00" stroke-width="1"/>
<line x1="94.5" y1="207.3" x2="94.5" y2="229" stroke="#FFFF00" stroke-width="1"/>
<line x1="101.5" y1="210.6" x2="101.5" y2="229" stroke="#FFFF00" stroke-width="1"/>
<line x1="108.5" y1="214.0" x2="108.5" y2="229" stroke="#FFFF00" stroke-width="1"/>
<line x1="115.5" y1="217.3" x2="115.5" y2="229" stroke="#FFFF00" stroke-width="1"/>
<line x1="121.5" y1="220.2" x2="121.5" y2="229" stroke="#FFFF00" stroke-width="1"/>
<line x1="128.5" y1="223.5" x2="128.5" y2="229" stroke="#FFFF00" stroke-width="1"/>
<line x1="135.5" y1="226.9" x2="135.5" y2="229" stroke="#FFFF00" stroke-width="1"/>
<path fill="#FFFF00" fill-rule="evenodd" d="M-5,241 H20.5 L27,247 V263 L20.5,269 H-5 Z M-5,248 H17 V261 H-5 Z"/>
<path fill="#FFFF00" fill-rule="evenodd" d="M30,241 H62 L65,244 V257 L63.5,258.5 L65,260 V269 H55 V262 H40 V269 H30 Z M40,249 H56 V254 H40 Z"/>
<path fill="#FFFF00" d="M68,241 H101 V249 H89 V269 H80 V249 H68 Z"/>
<path fill="#FFFF00" d="M104,241 H114 V251 H131 V241 H141 V269 H131 V259 H114 V269 H104 Z"/>
<path fill="none" stroke="#00FF00" stroke-width="1.1" d="M2,297.5 H7 M2,318.5 H7"/>
<path fill="none" stroke="#00FF00" stroke-width="1.1" d="M13.5,303.5 l1.5,1.5 l-1.5,1.5 l-1.5,-1.5 Z M13.5,315.5 l1.5,1.5 l-1.5,1.5 l-1.5,-1.5 Z"/>
<path d="M45.50,301.50 L47.50,300.50 L50.50,297.50 L50.50,318.50" fill="none" stroke="#00FF00" stroke-width="1"/>
<path d="M144.43,302.50 L144.43,301.50 L145.36,299.50 L146.29,298.50 L148.15,297.50 L151.87,297.50 L153.73,298.50 L154.66,299.50 L155.59,301.50 L155.59,303.50 L154.66,305.50 L152.80,308.50 L143.50,318.50 L156.52,318.50 M167.68,297.50 L164.89,298.50 L163.03,301.50 L162.10,306.50 L162.10,309.50 L163.03,314.50 L164.89,317.50 L167.68,318.50 L169.54,318.50 L172.33,317.50 L174.19,314.50 L175.12,309.50 L175.12,306.50 L174.19,301.50 L172.33,298.50 L169.54,297.50 L167.68,297.50" fill="none" stroke="#00FF00" stroke-width="1"/>
<path fill="none" stroke="#00FF00" stroke-width="1.1" d="M97,306.5 H116.5 M97,312.5 H116.5"/>
<path d="M63.5,294.5 L64.5,293.5 L65.5,294.5 V297 L63.5,299.5 M69.5,293.5 L70.5,294.5 V297 L69.5,299.5 M183.5,294 L184.5,293 L185.5,294.5 V296.5 L183.5,299.5" fill="none" stroke="#00FF00" stroke-width="1"/>
<path fill="none" stroke="#0000FF" stroke-width="1" d="M17.5,609 V591 L53.5,650.5 H17.5 V610.5"/>
<path fill="none" stroke="#0000FF" stroke-width="1" d="M17.5,641.5 H26.5 V650.5"/>
<path fill="none" stroke="#0000FF" stroke-width="1" d="M17.5,610.5 L21.5,613.5 L25.5,610.5 M21.5,613.5 V617.5"/>
<path fill="none" stroke="#0000FF" stroke-width="1" d="M35.5,641.5 L44.5,650 M44,641.5 L37,650"/></svg>

<!-- COMMAND -->
<svg class="a" style="left:0;top:26px" width="24" height="19">
<rect x="4" y="1" width="16" height="17" fill="#fff"/>
<rect x="4.5" y="2.5" width="13" height="12" fill="#F0F0F0" stroke="#505050" stroke-width="1"/>
<path d="M6,4 H19.5 V14 L17,16.5 H6 Z" fill="#0A3A80"/>
<rect x="6" y="4" width="2" height="12" fill="#3060D0"/>
<rect x="8.5" y="5" width="10.5" height="9.5" fill="#10A8D8"/>
<path d="M9,8.5 H18.5 M13.5,5 V15.5" stroke="#fff" stroke-width="1.5"/>
<circle cx="13.5" cy="8.5" r="1.6" fill="#fff"/><circle cx="13.5" cy="8.5" r="0.8" fill="#000"/>
<path d="M16,16.5 L19.5,13 V16.5 Z" fill="#fff" stroke="#303030" stroke-width="0.6"/>
</svg>
<svg class="a" style="left:955px;top:2px" width="69" height="21">
<path d="M18,4.5 H12 Q8.5,4.5 8.5,8.5 V11" fill="none" stroke="#7AA6FF" stroke-width="3"/><rect x="5" y="13" width="7" height="3" fill="#fff"/>
<rect x="31.5" y="5.5" width="7" height="5" fill="none" stroke="#fff" stroke-width="1"/><rect x="31" y="5" width="8" height="2" fill="#fff"/>
<rect x="28.5" y="9.5" width="7" height="6" fill="#3C6CF4" stroke="#fff" stroke-width="1"/><rect x="28" y="9" width="8" height="2" fill="#fff"/>
<path d="M52,6 L61,15 M61,6 L52,15" stroke="#fff" stroke-width="2"/>
</svg>
<div class="a" style="left:970px;top:26px;width:54px;height:19px;background:#fff"></div>
<div class="a" style="left:971px;top:27px;width:15px;height:16px;background:#FFFBC7;border-right:1px solid #A0A0A0;border-bottom:1px solid #A0A0A0;box-shadow:inset 1px 1px 0 #fff"></div>
<div class="a" style="left:989px;top:27px;width:15px;height:16px;background:#FFFBC7;border-right:1px solid #A0A0A0;border-bottom:1px solid #A0A0A0;box-shadow:inset 1px 1px 0 #fff"></div>
<div class="a" style="left:1007px;top:27px;width:15px;height:16px;background:#FFFBC7;border-right:1px solid #A0A0A0;border-bottom:1px solid #A0A0A0;box-shadow:inset 1px 1px 0 #fff"></div>
<svg class="a" style="left:970px;top:26px" width="54" height="19">
<rect x="5" y="11" width="6" height="2" fill="#505050"/>
<rect x="22.5" y="7.5" width="5" height="5" fill="none" stroke="#505050" stroke-width="1"/><rect x="22" y="7" width="6" height="2" fill="#505050"/>
<path d="M24.5,6 V4.5 H30.5 V9.5 H28" fill="none" stroke="#505050" stroke-width="1"/><rect x="24" y="4" width="7" height="2" fill="#505050"/>
<path d="M41.5,5.5 L48.5,12.5 M48.5,5.5 L41.5,12.5" stroke="#505050" stroke-width="2"/>
</svg>
<div class="a" style="left:1005px;top:132px;width:1px;height:534px;background:#FFFBC7"></div>
<div class="a" style="left:1006px;top:132px;width:15px;height:534px;background:#fff"></div>
<div class="a" style="left:1021px;top:132px;width:3px;height:534px;background:#FFFBC7"></div>
<div class="a" style="left:1007px;top:133px;width:13px;height:14px;background:#C8CAFC;border-radius:1px"></div>
<div class="a" style="left:1007px;top:147px;width:13px;height:1px;background:#6A90C8"></div>
<div class="a" style="left:1007px;top:163px;width:13px;height:14px;background:#C8CAFC;border-radius:1px"></div>
<div class="a" style="left:1007px;top:177px;width:13px;height:1px;background:#6A90C8"></div>
<div class="a" style="left:1007px;top:650px;width:13px;height:15px;background:#C8CAFC;border-radius:1px"></div>
<div class="a" style="left:1007px;top:665px;width:13px;height:1px;background:#6A90C8"></div>
<svg class="a" style="left:1005px;top:132px" width="19" height="534">
<path d="M5,10 L8.8,6.2 L12.6,10" fill="none" stroke="#1F5585" stroke-width="2"/>
<path d="M5,34.5 H11.5 M5,36.5 H11.5 M5,38.5 H11.5 M5,40.5 H11.5" stroke="#fff" stroke-width="1"/>
<path d="M5,524 L8.8,527.8 L12.6,524" fill="none" stroke="#1F5585" stroke-width="2"/>
</svg>
<div class="a" style="left:0px;top:666px;width:1024px;height:17px;background:#FFFBC7"></div>
<div class="a" style="left:0px;top:683px;width:1024px;height:2px;background:#fff"></div>
<div class="a" style="left:686px;top:667px;width:286px;height:15px;background:repeating-conic-gradient(#FFFBC7 0 25%,#fff 0 50%) 0 0/2px 2px"></div>
<div class="a" style="left:2px;top:667px;width:18px;height:15px;background:#FFFBC7;border-left:1px solid #fff;border-top:1px solid #fff;border-right:1px solid #A0A0A0;border-bottom:1px solid #A0A0A0"></div>
<div class="a" style="left:20px;top:667px;width:18px;height:15px;background:#FFFBC7;border-left:1px solid #fff;border-top:1px solid #fff;border-right:1px solid #A0A0A0;border-bottom:1px solid #A0A0A0"></div>
<div class="a" style="left:38px;top:667px;width:18px;height:15px;background:#FFFBC7;border-left:1px solid #fff;border-top:1px solid #fff;border-right:1px solid #A0A0A0;border-bottom:1px solid #A0A0A0"></div>
<div class="a" style="left:56px;top:667px;width:18px;height:15px;background:#FFFBC7;border-left:1px solid #fff;border-top:1px solid #fff;border-right:1px solid #A0A0A0;border-bottom:1px solid #A0A0A0"></div>
<svg class="a" style="left:0;top:666px" width="180" height="17">
<rect x="6" y="4" width="2" height="8" fill="#000"/><path d="M9,8 L13.5,3.5 V12.5 Z" fill="#000"/>
<path d="M25,8 L30,3 V13 Z" fill="#000"/>
<path d="M49,8 L44,3 V13 Z" fill="#000"/>
<path d="M61.5,3.5 L66,8 L61.5,12.5 Z" fill="#000"/><rect x="67" y="4" width="2" height="8" fill="#000"/>
<path d="M78,1 L81.5,15 H117 L119,1 Z" fill="#FFFBC7"/>
<path d="M78,1 L81.5,15 H117 L119,1" fill="none" stroke="#000" stroke-width="1"/>
<path d="M119.5,1 L123,15 H168 L172,1 Z" fill="#000"/>
<path d="M120,1 L123.5,15" stroke="#A0A0A0" stroke-width="1"/>
<path d="M172,1 L168,15" stroke="#A0A0A0" stroke-width="1"/>
<text x="85" y="12" font-size="11" letter-spacing="0" fill="#000">Model</text>
<text x="125.5" y="12" font-size="11" letter-spacing="-0.15" fill="#fff">Layout1</text>
</svg>
<div class="a" style="left:663px;top:667px;width:5px;height:14px;background:#fff;border:1px solid #A0A0A0;border-radius:2px"></div>
<div class="a" style="left:670px;top:668px;width:15px;height:13px;background:#C8CAFC;border-radius:1px"></div>
<div class="a" style="left:670px;top:681px;width:15px;height:1px;background:#6A90C8"></div>
<div class="a" style="left:972px;top:668px;width:15px;height:13px;background:#C8CAFC;border-radius:1px"></div>
<div class="a" style="left:972px;top:681px;width:15px;height:1px;background:#6A90C8"></div>
<div class="a" style="left:989px;top:668px;width:15px;height:13px;background:#C8CAFC;border-radius:1px"></div>
<div class="a" style="left:989px;top:681px;width:15px;height:1px;background:#6A90C8"></div>
<svg class="a" style="left:660px;top:666px" width="364" height="17">
<path d="M18.5,4 L14.5,8 L18.5,12" fill="none" stroke="#1F5585" stroke-width="2"/>
<path d="M316.5,5 V11 M318.5,5 V11 M320.5,5 V11 M322.5,5 V11" stroke="#fff" stroke-width="1"/>
<path d="M336,4 L340,8 L336,12" fill="none" stroke="#1F5585" stroke-width="2"/>
</svg>
<div class="a" style="left:0px;top:688px;width:1024px;height:2px;background:#000"></div>
<div class="a" style="left:0px;top:690px;width:1024px;height:56px;background:#FFFBC7"></div>
<div class="a" style="left:16px;top:694px;width:1000px;height:2px;background:#000"></div>
<div class="a" style="left:16px;top:696px;width:2px;height:48px;background:#000"></div>
<div class="a" style="left:18px;top:696px;width:998px;height:31px;background:#fff"></div>
<div class="a" style="left:18px;top:727px;width:998px;height:15px;background:#fff"></div>
<div class="a" style="left:18px;top:726px;width:998px;height:1px;background:#A0A0A0"></div>
<div class="a" style="left:6px;top:698px;width:1px;height:41px;background:#fff"></div>
<div class="a" style="left:8px;top:698px;width:1px;height:41px;background:#A0A0A0"></div>
<div class="a" style="left:10px;top:698px;width:1px;height:41px;background:#fff"></div>
<div class="a" style="left:12px;top:698px;width:1px;height:41px;background:#A0A0A0"></div>
<div class="a" style="left:1001px;top:697px;width:14px;height:13px;background:#C8CAFC;border-radius:1px"></div>
<div class="a" style="left:1001px;top:710px;width:14px;height:1px;background:#6A90C8"></div>
<div class="a" style="left:1001px;top:712px;width:14px;height:13px;background:#C8CAFC;border-radius:1px"></div>
<div class="a" style="left:1001px;top:725px;width:14px;height:1px;background:#6A90C8"></div>
<svg class="a" style="left:1000px;top:696px" width="24" height="30">
<path d="M4.5,9.5 L8.5,5.5 L12.5,9.5" fill="none" stroke="#1F5585" stroke-width="2"/>
<path d="M4.5,20 L8.5,24 L12.5,20" fill="none" stroke="#1F5585" stroke-width="2"/>
</svg>
<div class="a" style="left:931px;top:727px;width:85px;height:15px;background:#FFFBC7"></div>
<div class="a" style="left:965px;top:728px;width:17px;height:13px;background:repeating-conic-gradient(#FFFBC7 0 25%,#fff 0 50%) 0 0/2px 2px"></div>
<div class="a" style="left:934px;top:729px;width:14px;height:12px;background:#C8CAFC;border-radius:1px"></div>
<div class="a" style="left:934px;top:741px;width:14px;height:1px;background:#6A90C8"></div>
<div class="a" style="left:950px;top:729px;width:15px;height:12px;background:#C8CAFC;border-radius:1px"></div>
<div class="a" style="left:950px;top:741px;width:15px;height:1px;background:#6A90C8"></div>
<div class="a" style="left:982px;top:729px;width:15px;height:12px;background:#C8CAFC;border-radius:1px"></div>
<div class="a" style="left:982px;top:741px;width:15px;height:1px;background:#6A90C8"></div>
<svg class="a" style="left:930px;top:727px" width="70" height="15">
<path d="M12.5,3 L8.5,7 L12.5,11" fill="none" stroke="#1F5585" stroke-width="2"/>
<path d="M25.5,4 V10 M27.5,4 V10 M29.5,4 V10 M31.5,4 V10" stroke="#fff" stroke-width="1"/>
<path d="M58,3 L62,7 L58,11" fill="none" stroke="#1F5585" stroke-width="2"/>
</svg>
<div class="a" style="left:0px;top:742px;width:1024px;height:2px;background:#FFFBC7"></div>
<div class="a" style="left:0px;top:744px;width:1024px;height:1px;background:#A8A8A8"></div>
<div class="a" style="left:0px;top:745px;width:1024px;height:1px;background:#fff"></div>
<div class="a" style="left:0px;top:746px;width:1024px;height:3px;background:#C8C8C8"></div>
<div class="a" style="left:0px;top:749px;width:1024px;height:14px;background:#FFFBC7"></div>
<div class="a" style="left:0px;top:762px;width:1024px;height:1px;background:#F4D4CC"></div>
<div class="a" style="left:0px;top:763px;width:1024px;height:3px;background:#C8C8C8"></div>
<div class="a" style="left:0px;top:749px;width:1024px;height:1px;background:#F4D4CC"></div>
<div class="a" style="left:5px;top:749px;width:238px;height:14px;border-left:1px solid #A0A0A0;border-top:1px solid #A0A0A0;border-right:1px solid #A0A0A0;background:linear-gradient(#FFFBC7,#FFFBC7)"></div>
<div class="a" style="left:6px;top:750px;width:10px;height:12px;background:#fff"></div>
<div class="a" style="left:247px;top:749px;width:33px;height:17px;border-left:1px solid #fff;border-top:1px solid #fff;border-right:1px solid #909090"></div>
<div class="a sb" style="left:249.5px;top:753px">SNAP</div>
<div class="a" style="left:284px;top:749px;width:32px;height:17px;border-left:1px solid #fff;border-top:1px solid #fff;border-right:1px solid #909090"></div>
<div class="a sb" style="left:286.5px;top:753px">GRID</div>
<div class="a" style="left:319px;top:749px;width:44px;height:17px;border-left:1px solid #fff;border-top:1px solid #fff;border-right:1px solid #909090"></div>
<div class="a sb" style="left:321.5px;top:753px">ORTHO</div>
<div class="a" style="left:366px;top:749px;width:40px;height:17px;border-left:1px solid #fff;border-top:1px solid #fff;border-right:1px solid #909090"></div>
<div class="a sb" style="left:368px;top:753px">POLAR</div>
<div class="a" style="left:410px;top:749px;width:42px;height:17px;border-left:1px solid #fff;border-top:1px solid #fff;border-right:1px solid #909090"></div>
<div class="a sb" style="left:412.5px;top:753px">OSNAP</div>
<div class="a" style="left:455px;top:749px;width:49px;height:17px;border-left:1px solid #000;border-top:1px solid #000;border-right:1px solid #fff;background:#FFFBC7"></div>
<div class="a" style="left:456px;top:763px;width:47px;height:3px;background:#C8C8C8"></div>
<div class="a sb" style="left:458px;top:754px">OTRACK</div>
<div class="a" style="left:507px;top:749px;width:29px;height:17px;border-left:1px solid #fff;border-top:1px solid #fff;border-right:1px solid #909090"></div>
<div class="a sb" style="left:509.5px;top:753px">LWT</div>
<div class="a" style="left:539px;top:749px;width:41px;height:17px;border-left:1px solid #000;border-top:1px solid #000;border-right:1px solid #fff;background:#FFFBC7"></div>
<div class="a" style="left:540px;top:763px;width:39px;height:3px;background:#C8C8C8"></div>
<div class="a sb" style="left:542.5px;top:754px">PAPER</div>
<div class="a" style="left:984px;top:749px;width:24px;height:17px;border-left:1px solid #A0A0A0;border-top:1px solid #A0A0A0;border-right:1px solid #fff"></div>
<svg class="a" style="left:984px;top:748px" width="40" height="20">
<path d="M6,4 Q10,1 13,4 L9,14 L6,16 Z" fill="#B0C0E0" stroke="#405080" stroke-width="0.8"/>
<path d="M12,16 L16,8 L20,16 Z" fill="#FFD800" stroke="#806000" stroke-width="0.8"/>
<rect x="15.5" y="10" width="1.5" height="3" fill="#000"/><rect x="15.5" y="14" width="1.5" height="1.5" fill="#000"/>
<path d="M30,12 H37 L33.5,15.5 Z" fill="#000"/>
</svg>
<div class="a" style="left:0px;top:766px;width:1024px;height:2px;background:#3C7CF0"></div>
<div class="a cmd" style="left:18px;top:697px">Specify corner of window, enter a scale factor (nX or nXP), or</div>
<div class="a cmd" style="left:18px;top:710px">[All/Center/Dynamic/Extents/Previous/Scale/Window] &lt;real time&gt;: *Cancel*</div>
<div class="a cmd" style="left:18px;top:730px">Command:</div>
<div class="a sb" style="left:7px;top:753px;letter-spacing:-0.6px">35.9162, 18.4240, 0.0000</div>
</div></body></html>
